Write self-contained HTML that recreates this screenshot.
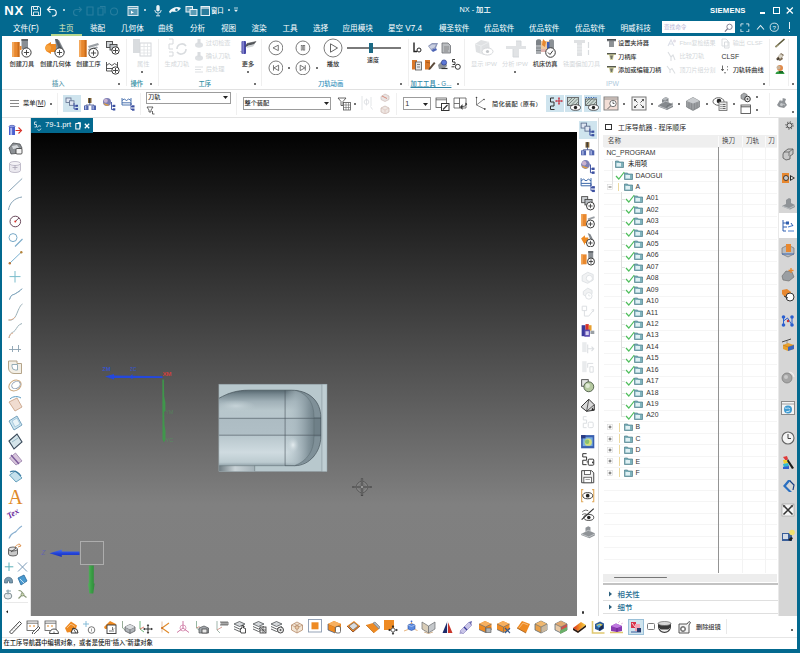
<!DOCTYPE html>
<html lang="zh-CN"><head><meta charset="utf-8"><title>NX - 加工</title>
<style>
*{box-sizing:border-box;margin:0;padding:0}
html,body{width:800px;height:653px;overflow:hidden;background:#fff}
body{position:relative;font-family:"Liberation Sans","Noto Sans CJK SC",sans-serif;font-size:6.3px;color:#333;line-height:1}
.a{position:absolute;white-space:nowrap}
.t{position:absolute;white-space:nowrap;line-height:1;font-weight:500}
#title{left:0;top:0;width:800px;height:36px;background:#03698f}
#frameL{left:0;top:0;width:2px;height:653px;background:#03698f}
#frameR{left:797px;top:0;width:3px;height:653px;background:#03698f}
#frameB{left:0;top:649px;width:800px;height:4px;background:#03698f}
.tab{color:#fff;font-size:7.6px;top:24.8px;font-weight:400}
.gl{color:#4b93ad;font-size:6.3px;top:80px}
.lb{color:#333;font-size:6.2px}
.dis{color:#c9cdd0}
#vp{left:31px;top:132px;width:546px;height:484px;background:linear-gradient(180deg,#020202 0%,#808080 77%,#7e7e7e 100%)}
.hl{background:#e2e2e2;height:1px}
.vl{background:#e2e2e2;width:1px}
.tr{font-size:6.6px;color:#333}
.dot{position:absolute;width:2px;height:2px;border-radius:1px;background:#444}
</style></head><body>
<div class="a" id="title"></div>
<div class="t" style="left:4.2px;top:4.1px;font-size:13px;font-weight:bold;color:#fff;letter-spacing:.9px">NX</div>
<svg class="a" style="left:30px;top:4.8px" width="12" height="12" viewBox="0 0 12 12"><path d="M1.5 1.5h7.5l1.5 1.5v7.5h-9z" fill="none" stroke="#e8f1f5" stroke-width="1"/><path d="M3.5 1.5v3h4v-3M3.5 10.500v-3.500h5v3.500" fill="none" stroke="#e8f1f5" stroke-width=".9"/></svg>
<svg class="a" style="left:46px;top:4.8px" width="13" height="12" viewBox="0 0 13 12"><path d="M1.500 4.500h5.500a3 3 0 0 1 0 6.500h-1" fill="none" stroke="#f2f7f9" stroke-width="1.2"/><path d="M4.500 1.500l-3 3 3 3" fill="none" stroke="#f2f7f9" stroke-width="1.200"/></svg>
<div class="a" style="left:62.500px;top:9.3px;width:2px;height:2px;background:#e8f1f5;border-radius:1px"></div>
<!-- faded icons -->
<svg class="a" style="left:72px;top:4.8px;opacity:.14" width="48" height="12" viewBox="0 0 48 12"><g fill="none" stroke="#fff" stroke-width="1.100"><path d="M9.500 4.500h-5a3 3 0 0 0 0 6h1M7 2l2.500 2.500-2.500 2.500"/><path d="M15 2h6v8h-6z"/><path d="M26 3h5v7h-5zM28 1.500h5v7"/><circle cx="42" cy="6.500" r="3.500"/></g></svg>
<svg class="a" style="left:127px;top:4.8px" width="12" height="12" viewBox="0 0 12 12"><rect x="1" y="1.500" width="10" height="9" fill="#5b9bb5" stroke="#d6e6ed" stroke-width="1"/><path d="M1 3.500h10" stroke="#d6e6ed" stroke-width="1"/><path d="M4 5.500v3.500l1-1h2z" fill="#fff"/></svg>
<div class="a" style="left:143.500px;top:9.3px;width:2px;height:2px;background:#e8f1f5;border-radius:1px"></div>
<svg class="a" style="left:153px;top:4.3px" width="10" height="13" viewBox="0 0 10 13"><rect x="3.300" y="1" width="3.400" height="6.500" rx="1.700" fill="#e8f1f5"/><path d="M1.800 6a3.200 3.200 0 0 0 6.400 0M5 9.500v2M3 11.800h4" fill="none" stroke="#e8f1f5" stroke-width=".9"/></svg>
<svg class="a" style="left:168px;top:4.8px" width="14" height="11" viewBox="0 0 14 11"><path d="M1 6.500c3-4 8-5.500 12-3.500-2 3.500-6 4.500-9 3.500l-2 2z" fill="#f2f7f9"/><circle cx="8.500" cy="4.800" r="1.300" fill="#03698f"/></svg>
<svg class="a" style="left:185px;top:4.8px" width="13" height="12" viewBox="0 0 13 12"><rect x="1" y="1.500" width="6.500" height="5.500" fill="#5b9bb5" stroke="#e8f1f5" stroke-width="1"/><rect x="5" y="4.500" width="7" height="6" fill="#5b9bb5" stroke="#e8f1f5" stroke-width="1"/></svg>
<svg class="a" style="left:199.500px;top:4.8px" width="11" height="12" viewBox="0 0 11 12"><rect x="1" y="1.500" width="8.500" height="9" fill="#2b7c9b" stroke="#e8f1f5" stroke-width="1"/><path d="M1 3h8.500" stroke="#e8f1f5" stroke-width="1.200"/></svg>
<div class="t" style="left:211px;top:7.5px;font-size:6.300px;color:#fff">窗口</div>
<div class="a" style="left:227.500px;top:9.3px;width:2px;height:2px;background:#e8f1f5;border-radius:1px"></div>
<svg class="a" style="left:233px;top:7.3px" width="6" height="6" viewBox="0 0 6 6"><path d="M1 1h4" stroke="#e8f1f5" stroke-width=".8"/><path d="M1 2.800h4l-2 2.200z" fill="#e8f1f5"/></svg>
<div class="t" style="left:459.500px;top:6.400px;font-size:7.300px;color:#fff">NX - 加工</div>
<div class="t" style="left:710px;top:7.300px;font-size:7.700px;font-weight:bold;color:#fff;letter-spacing:.15px">SIEMENS</div>
<div class="a" style="left:760px;top:12.400px;width:5.300px;height:1.200px;background:#fff"></div>
<div class="a" style="left:772.800px;top:7.300px;width:7.200px;height:6.400px;border:1.100px solid #fff"></div>
<svg class="a" style="left:786.400px;top:7px" width="7.500" height="7" viewBox="0 0 7.500 7"><path d="M.7 .5l6.100 6M6.800 .5l-6.100 6" stroke="#fff" stroke-width="1.200"/></svg>
<!-- tabs -->
<div class="t tab" style="left:13px">文件<span style="font-size:8.2px">(F)</span></div>
<div class="t tab" style="left:58.500px;color:#e0eebc">主页</div>
<div class="a" style="left:50.500px;top:33.500px;width:31.500px;height:2.100px;background:#b4d58c"></div>
<div class="t tab" style="left:90px">装配</div>
<div class="t tab" style="left:121px">几何体</div>
<div class="t tab" style="left:158px">曲线</div>
<div class="t tab" style="left:190px">分析</div>
<div class="t tab" style="left:221px">视图</div>
<div class="t tab" style="left:251.500px">渲染</div>
<div class="t tab" style="left:282.500px">工具</div>
<div class="t tab" style="left:313px">选择</div>
<div class="t tab" style="left:342.500px">应用模块</div>
<div class="t tab" style="left:388px">星空 <span style="font-size:8.2px">V7.4</span></div>
<div class="t tab" style="left:439px">模圣软件</div>
<div class="t tab" style="left:484px">优品软件</div>
<div class="t tab" style="left:529px">优品软件</div>
<div class="t tab" style="left:575px">优品软件</div>
<div class="t tab" style="left:620.500px">明威科技</div>
<div class="a" style="left:661.500px;top:21.300px;width:73px;height:11.700px;background:#fff"></div>
<div class="t" style="left:664px;top:24.600px;font-size:5.600px;color:#c3c0dc">查找命令</div>
<svg class="a" style="left:724px;top:22.600px" width="9.500" height="9.500" viewBox="0 0 10 10"><circle cx="5.800" cy="4" r="2.800" fill="none" stroke="#77778a" stroke-width=".9"/><path d="M3.800 6l-2.800 3" stroke="#77778a" stroke-width="1.300"/></svg>
<svg class="a" style="left:740px;top:22.500px" width="9.700" height="9.700" viewBox="0 0 11 11"><path d="M1 4v-3h3M7 1h3v3M10 7v3h-3M4 10h-3v-3" fill="none" stroke="#e8f1f5" stroke-width="1"/></svg>
<svg class="a" style="left:755.800px;top:23px" width="9" height="9" viewBox="0 0 9 9"><path d="M1 6.500l3.500-4 3.500 4" fill="none" stroke="#e8f1f5" stroke-width="1.100"/></svg>
<svg class="a" style="left:769.400px;top:22.200px" width="10.500" height="10.500" viewBox="0 0 11 11"><circle cx="5.500" cy="5.500" r="4.300" fill="none" stroke="#e8f1f5" stroke-width=".9"/><text x="5.500" y="8" font-size="6.500" fill="#e8f1f5" text-anchor="middle" font-family="Liberation Sans,sans-serif">?</text></svg>
<div class="a" style="left:788.800px;top:22px;width:1.600px;height:7.300px;background:#e8f1f5"></div><div class="a" style="left:788.800px;top:30.500px;width:1.600px;height:1.600px;background:#e8f1f5"></div>

<div class="a" style="left:2px;top:89px;width:795px;height:1px;background:#e1e1e1;"></div>
<div class="a" style="left:125.5px;top:39px;width:1px;height:47px;background:#efefef;"></div>
<div class="a" style="left:157.5px;top:39px;width:1px;height:47px;background:#efefef;"></div>
<div class="a" style="left:261px;top:39px;width:1px;height:47px;background:#efefef;"></div>
<div class="a" style="left:407.5px;top:39px;width:1px;height:47px;background:#efefef;"></div>
<div class="a" style="left:463.8px;top:39px;width:1px;height:47px;background:#efefef;"></div>
<div class="a" style="left:769.4px;top:39px;width:1px;height:47px;background:#efefef;"></div>
<div class="a" style="left:788px;top:39px;width:1px;height:47px;background:#efefef;"></div>
<svg class="a" style="left:10px;top:37px;" width="24" height="22" viewBox="0 0 24 22"><rect x="2" y="5" width="7.5" height="15" fill="#e8882f"/><rect x="2" y="5" width="2.2" height="15" fill="#f3a85c"/><rect x="7.6" y="5" width="1.900" height="15" fill="#c96c1c"/><rect x="11.500" y="2" width="6.500" height="10" fill="#8a8f94"/><rect x="11.500" y="2" width="6.500" height="2" fill="#5f6468"/><rect x="9.500" y="9" width="2" height="4" fill="#e8882f"/><circle cx="16.5" cy="15.5" r="4.6" fill="#fff" stroke="#3a3a3a" stroke-width="1"/><path d="M13.9 15.5h5.2M16.5 12.9v5.2" stroke="#3a3a3a" stroke-width=".9"/></svg>
<svg class="a" style="left:43px;top:37px;" width="24" height="22" viewBox="0 0 24 22"><path d="M12 2l4 1 6 12-4 4-4-2z" fill="#84898e"/><path d="M12 2l2.500 0 6 13-2.500 2z" fill="#5d6266"/><path d="M3 8l5-3 0 2 5 0 0 8-5 0 0 2-5-3z" fill="#ee8a22"/><circle cx="5" cy="11" r="3" fill="#f7a13c"/><circle cx="16.5" cy="15.5" r="4.6" fill="#fff" stroke="#3a3a3a" stroke-width="1"/><path d="M13.9 15.5h5.2M16.5 12.9v5.2" stroke="#3a3a3a" stroke-width=".9"/></svg>
<svg class="a" style="left:77px;top:37px;" width="24" height="22" viewBox="0 0 24 22"><rect x="2" y="3" width="7.500" height="17" fill="#e8882f"/><rect x="2" y="3" width="2.200" height="17" fill="#f3a85c"/><rect x="7.600" y="3" width="1.900" height="17" fill="#c96c1c"/><path d="M11 9l10-3 1 2-10 3zM11 12l9-2.500 1 1.500-9 3z" fill="#9a9fa4"/><circle cx="16.5" cy="16" r="4.6" fill="#fff" stroke="#3a3a3a" stroke-width="1"/><path d="M13.9 16h5.2M16.5 13.4v5.2" stroke="#3a3a3a" stroke-width=".9"/></svg>
<div class="t" style="left:9.5px;top:60.8px;font-size:6.2px;color:#333;">创建刀具</div>
<div class="t" style="left:40px;top:60.8px;font-size:6.2px;color:#333;">创建几何体</div>
<div class="t" style="left:76px;top:60.8px;font-size:6.2px;color:#333;">创建工序</div>
<svg class="a" style="left:105px;top:40px;" width="16" height="16" viewBox="0 0 16 16"><rect x="1.500" y="1.500" width="6" height="6" fill="#cfd3d6" stroke="#444" stroke-width=".9"/><rect x="5" y="4.500" width="7" height="5.500" fill="#b9bec3" stroke="#444" stroke-width=".9"/><circle cx="10.5" cy="10.5" r="3.7" fill="#fff" stroke="#3a3a3a" stroke-width="1"/><path d="M7.9 10.5h5.2M10.5 7.9v5.2" stroke="#3a3a3a" stroke-width=".9"/></svg>
<svg class="a" style="left:105px;top:60px;" width="16" height="16" viewBox="0 0 16 16"><path d="M1.500 2v9h11v-9M1.500 5.500l2.700-2 2.700 2 2.700-2 2.900 2M1.500 8.500h11" fill="none" stroke="#444" stroke-width=".9"/><circle cx="10.5" cy="10.5" r="3.7" fill="#fff" stroke="#3a3a3a" stroke-width="1"/><path d="M7.9 10.5h5.2M10.5 7.9v5.2" stroke="#3a3a3a" stroke-width=".9"/></svg>
<div class="t" style="left:52px;top:80.9px;font-size:6.3px;color:#5596aa;">插入</div>
<div class="dot" style="left:118.3px;top:82.5px;background:#444"></div>
<svg class="a" style="left:131px;top:37px;" width="24" height="22" viewBox="0 0 24 22"><rect x="2" y="2" width="7" height="14" fill="#d9dcdf"/><rect x="9" y="6" width="11" height="13" fill="#fff" stroke="#d3d6da" stroke-width="1"/><path d="M9 9.500h11M9 13h11M9 16h11M13 6v13M16.500 6v13" stroke="#dfe2e5" stroke-width=".8"/></svg>
<div class="t" style="left:137px;top:60.8px;font-size:6.2px;color:#d3d7da;;font-weight:400">属性</div>
<div class="dot" style="left:141.3px;top:70.7px;background:#444"></div>
<div class="t" style="left:130.5px;top:80.9px;font-size:6.3px;color:#2f8ea3;">操作</div>
<div class="dot" style="left:149.5px;top:82.5px;background:#444"></div>
<svg class="a" style="left:165px;top:37px;" width="24" height="22" viewBox="0 0 24 22"><path d="M4 2h4v5h-4v5h4M4 15h4v4h-4" fill="none" stroke="#d6d9dc" stroke-width="1"/><path d="M12 12a5 5 0 0 1 9-3M21 12a5 5 0 0 1-9 3" fill="none" stroke="#d9dcdf" stroke-width="1.600"/></svg>
<div class="t" style="left:164.5px;top:60.8px;font-size:6.2px;color:#d3d7da;;font-weight:400">生成刀轨</div>
<svg class="a" style="left:194px;top:38.2px;" width="11" height="11" viewBox="0 0 11 11"><ellipse cx="5" cy="7" rx="4" ry="2.800" fill="#dde0e3"/><rect x="3.500" y="1" width="3" height="5" fill="#d9dcdf"/></svg>
<div class="t" style="left:205.8px;top:40.2px;font-size:6.2px;color:#d3d7da;;font-weight:400">过切检查</div>
<svg class="a" style="left:194px;top:51.3px;" width="11" height="11" viewBox="0 0 11 11"><ellipse cx="5" cy="7" rx="4" ry="2.800" fill="#dde0e3"/><rect x="3.500" y="1" width="3" height="5" fill="#d9dcdf"/></svg>
<div class="t" style="left:205.8px;top:53.3px;font-size:6.2px;color:#d3d7da;;font-weight:400">确认刀轨</div>
<svg class="a" style="left:194px;top:64.4px;" width="11" height="11" viewBox="0 0 11 11"><path d="M1 3h8M1 5.500h6M1 8h8" stroke="#dde0e3" stroke-width="1"/></svg>
<div class="t" style="left:205.8px;top:66.4px;font-size:6.2px;color:#d3d7da;;font-weight:400">后处理</div>
<svg class="a" style="left:239px;top:39px;" width="19" height="17" viewBox="0 0 19 17"><rect x="2.500" y="2" width="4.500" height="13" rx="1" fill="#4747a6"/><rect x="3.500" y="2" width="1.300" height="13" fill="#8f8fd6"/><path d="M1.500 12l1.500 1.500M8 4.500l9-2-2.500 3-8 2z" fill="#55585c" stroke="#3c3f42" stroke-width=".5"/><path d="M9 6.500l7-1.500-2 2.500-6.500 1.500z" fill="#cfd3d6"/></svg>
<div class="t" style="left:241.8px;top:60.8px;font-size:6.2px;color:#333;">更多</div>
<div class="dot" style="left:247px;top:70.7px;background:#444"></div>
<div class="t" style="left:198.5px;top:80.9px;font-size:6.3px;color:#2f8ea3;">工序</div>
<div class="dot" style="left:254.4px;top:82.5px;background:#444"></div>
<svg class="a" style="left:267.70000000000005px;top:40.1px;" width="15.8" height="15.8" viewBox="0 0 15.8 15.8"><circle cx="7.9" cy="7.9" r="6.9" fill="#fff" stroke="#5a5a5a" stroke-width=".8"/><path d="M5 7.900l5.300-2.700v5.400z" fill="none" stroke="#555" stroke-width=".8"/></svg>
<svg class="a" style="left:295.1px;top:40.1px;" width="15.8" height="15.8" viewBox="0 0 15.8 15.8"><circle cx="7.9" cy="7.9" r="6.9" fill="#fff" stroke="#5a5a5a" stroke-width=".8"/><rect x="6.200" y="5.700" width="1.400" height="4.400" fill="none" stroke="#555" stroke-width=".6"/><rect x="8.400" y="5.700" width="1.400" height="4.400" fill="none" stroke="#555" stroke-width=".6"/></svg>
<svg class="a" style="left:322.7px;top:37.7px;" width="20" height="20" viewBox="0 0 20 20"><circle cx="10" cy="10" r="9" fill="#fff" stroke="#5a5a5a" stroke-width=".8"/><path d="M7.500 5.800l7 4.200-7 4.200z" fill="none" stroke="#555" stroke-width=".9"/></svg>
<svg class="a" style="left:267.70000000000005px;top:59.6px;" width="15.8" height="15.8" viewBox="0 0 15.8 15.8"><circle cx="7.9" cy="7.9" r="6.9" fill="#fff" stroke="#5a5a5a" stroke-width=".8"/><path d="M5.500 5.200v5.400M6 7.900l4.600-2.700v5.400z" fill="none" stroke="#555" stroke-width=".8"/></svg>
<svg class="a" style="left:295.1px;top:59.6px;" width="15.8" height="15.8" viewBox="0 0 15.8 15.8"><circle cx="7.9" cy="7.9" r="6.9" fill="#fff" stroke="#5a5a5a" stroke-width=".8"/><path d="M10.300 5.200v5.400M9.800 7.900l-4.600-2.700v5.400z" fill="none" stroke="#555" stroke-width=".8"/></svg>
<div class="dot" style="left:288px;top:66.5px;background:#444"></div>
<div class="dot" style="left:315.5px;top:66.5px;background:#444"></div>
<div class="t" style="left:326.8px;top:60.8px;font-size:6.2px;color:#333;">播放</div>
<div class="a" style="left:347px;top:47.3px;width:54px;height:1.3px;background:#7a7a7a;"></div>
<div class="a" style="left:369.3px;top:43px;width:3.6px;height:10px;background:#1b6a85;"></div>
<div class="t" style="left:367px;top:57.2px;font-size:6.0px;color:#333;">速度</div>
<div class="t" style="left:318px;top:80.9px;font-size:6.3px;color:#3a94bd;">刀轨动画</div>
<div class="dot" style="left:400px;top:82.5px;background:#444"></div>
<svg class="a" style="left:411px;top:41px;" width="12" height="13" viewBox="0 0 12 13"><path d="M3 1.500v9h3" fill="none" stroke="#222" stroke-width="1.400"/><circle cx="8" cy="9" r="2" fill="none" stroke="#222" stroke-width="1"/></svg>
<svg class="a" style="left:427px;top:41px;" width="12" height="13" viewBox="0 0 12 13"><path d="M1 5l4-3h6l-2 5-5 2z" fill="#8d97b8"/><path d="M2 5.500l3-2h4l-1.500 3-3.500 1.500z" fill="#c9cfe0"/><path d="M4 9l5-2 1 2-4 2z" fill="#4f66b5"/></svg>
<svg class="a" style="left:440px;top:41px;" width="12" height="13" viewBox="0 0 12 13"><path d="M2 2h6l2.500 2.500v7.500h-8.500z" fill="#b9bcbf" stroke="#6c7074" stroke-width=".8"/><path d="M4 6h5M4 8h5M4 10h4" stroke="#777" stroke-width=".7"/></svg>
<svg class="a" style="left:411px;top:58px;" width="12" height="13" viewBox="0 0 12 13"><rect x="1" y="2" width="5" height="9.500" fill="#d9782a"/><rect x="4.500" y="4" width="6" height="8" fill="#e4e6e8" stroke="#555" stroke-width=".8"/><path d="M6 6.500h3M6 9h3" stroke="#555" stroke-width=".7"/></svg>
<svg class="a" style="left:424px;top:58px;" width="12" height="13" viewBox="0 0 12 13"><rect x="1" y="2" width="5" height="9.500" fill="#d9782a"/><path d="M5 10l5-6 1.500 1.200-5 6-2 .8z" fill="#5b4a3a"/><path d="M2 4l4 1" stroke="#a85a1a" stroke-width="1"/></svg>
<svg class="a" style="left:437px;top:58px;" width="12" height="13" viewBox="0 0 12 13"><path d="M1 7l3-3h5l1 4-3 3h-5z" fill="#8e9397"/><circle cx="7" cy="4.500" r="2.600" fill="#5d78d6" stroke="#2c3e8a" stroke-width=".7"/><path d="M4.500 10.500h6" stroke="#333" stroke-width="1.200"/></svg>
<svg class="a" style="left:450px;top:58px;" width="12" height="13" viewBox="0 0 12 13"><path d="M5 1.500h-2.500v2.500h2.500v2.500h-2.500" fill="none" stroke="#222" stroke-width=".9"/><circle cx="7.800" cy="8.800" r="2.500" fill="none" stroke="#222" stroke-width=".9"/><path d="M1.500 8.800h3" stroke="#222" stroke-width=".9"/></svg>
<div class="t" style="left:410.5px;top:80.9px;font-size:6.3px;color:#2f86a6;text-decoration:underline">加工工具 - G...</div>
<div class="dot" style="left:456.5px;top:82.5px;background:#444"></div>
<svg class="a" style="left:472px;top:38px;" width="24" height="21" viewBox="0 0 24 21"><path d="M3 6l6-4 8 2 1 9-6 4-8-3z" fill="#dfe1e3"/><path d="M3 6l6 2 8-4M9 8l0 8" stroke="#eceeef" stroke-width="1" fill="none"/><ellipse cx="15.500" cy="13.500" rx="5.500" ry="3.500" fill="#fff" stroke="#d2d5d8" stroke-width=".9"/><circle cx="15.500" cy="13.500" r="1.600" fill="#c3c6c9"/></svg>
<div class="t" style="left:471px;top:60.8px;font-size:6.2px;color:#d3d7da;;font-weight:400">显示 IPW</div>
<svg class="a" style="left:504px;top:38px;" width="24" height="21" viewBox="0 0 24 21"><path d="M2 8h10v-5h5v5h5v3h-7v8h-6v-8h-7z" fill="#e1e3e5"/><path d="M12 3h5v5M9 11v8h6" fill="none" stroke="#d3d6d9" stroke-width=".9"/></svg>
<div class="t" style="left:502px;top:60.8px;font-size:6.2px;color:#d3d7da;;font-weight:400">分析 IPW</div>
<div class="dot" style="left:514.4px;top:70.8px;background:#444"></div>
<svg class="a" style="left:534px;top:37px;" width="24" height="22" viewBox="0 0 24 22"><path d="M2 4c0-2 4-2.500 5-1v14h-5z" fill="#7d8287"/><path d="M15 3c2-1.500 5-1 5 1v9h-5z" fill="#8c9196"/><path d="M2 8h5v9h-5z" fill="#a9adb1"/><path d="M2 11h5M2 13.500h5" stroke="#6d7276" stroke-width=".7"/><path d="M7 4h8v8h-8z" fill="#f0c9a0"/><path d="M9 2l3 3-1 5-3-2z" fill="#e8882f"/><path d="M13 5h2.500v7h-2.500z" fill="#3f5fb5"/><path d="M7 12h8v3h-8z" fill="#d9a09a" opacity=".8"/><circle cx="16.500" cy="15.500" r="4.800" fill="#fff" stroke="#3a3a3a" stroke-width="1"/><path d="M14 15.500l2 2 3-4" fill="none" stroke="#3a3a3a" stroke-width="1"/></svg>
<div class="t" style="left:532.8px;top:60.8px;font-size:6.2px;color:#333;">机床仿真</div>
<svg class="a" style="left:571px;top:38px;" width="22" height="21" viewBox="0 0 22 21"><path d="M3 2h11v3h-3v13h-5v-13h-3z" fill="#dfe1e3"/><path d="M6 8h5M6 11h5M6 14h5" stroke="#eef0f1" stroke-width=".9"/><path d="M17.500 4v6M17.500 12v5" stroke="#d9dcdf" stroke-width="1.200"/></svg>
<div class="t" style="left:563px;top:60.8px;font-size:6.2px;color:#d3d7da;;font-weight:400">铣面偏加刀具</div>
<svg class="a" style="left:606px;top:38px;" width="11" height="10" viewBox="0 0 11 10"><path d="M1 1h9v2.200h-2.300v5.800h-4.400v-5.800h-2.300z" fill="#6d7175"/><path d="M3.300 3.200h4.400v5.800h-4.400z" fill="#8d9195"/><path d="M1 1h9v1h-9z" fill="#4a4d50"/></svg>
<div class="t" style="left:618px;top:40.3px;font-size:6.2px;color:#333;">设置夹持器</div>
<svg class="a" style="left:606px;top:52px;" width="11" height="9" viewBox="0 0 11 9"><path d="M1 1h9v2h-2l-1.200 5h-2.600l-1.200-5h-2z" fill="#d5d3a0"/><path d="M1 1h9v1.300h-9z" fill="#55584f"/><path d="M4 3.500h3l-.8 3.500h-1.400z" fill="#6f7268"/></svg>
<div class="t" style="left:618px;top:54px;font-size:6.2px;color:#333;">刀柄库</div>
<svg class="a" style="left:606px;top:65px;" width="11" height="9" viewBox="0 0 11 9"><path d="M1 1h9v2h-2l-1.200 5h-2.600l-1.200-5h-2z" fill="#d5d3a0"/><path d="M1 1h9v1.300h-9z" fill="#55584f"/><path d="M4 3.500h3l-.8 3.500h-1.400z" fill="#6f7268"/></svg>
<div class="t" style="left:618px;top:66.6px;font-size:6.2px;color:#333;">添加或编辑刀柄</div>
<div class="t" style="left:606px;top:80.6px;font-size:6.8px;color:#aec9dc;">IPW</div>
<svg class="a" style="left:666px;top:38px;" width="11" height="10" viewBox="0 0 11 10"><path d="M2 8l3-6 3 6M3 6h4" fill="none" stroke="#dcdfe8" stroke-width="1.100"/><circle cx="8.500" cy="3" r="1.500" fill="#e4dfe8"/></svg>
<div class="t" style="left:679.5px;top:40.3px;font-size:6.0px;color:#d3d7da;;font-weight:400">Fbm复检结果</div>
<svg class="a" style="left:666px;top:51px;" width="11" height="11" viewBox="0 0 11 11"><path d="M2 1l3 5 2-2 2 5M5 6v4" fill="none" stroke="#dcdfe2" stroke-width="1.100"/></svg>
<div class="t" style="left:679.5px;top:53.4px;font-size:6.2px;color:#d3d7da;;font-weight:400">比较刀轨</div>
<svg class="a" style="left:666px;top:64px;" width="11" height="11" viewBox="0 0 11 11"><path d="M1 2l3 4 2-1.500 3 5M4 6v3" fill="none" stroke="#dcdfe2" stroke-width="1.100"/></svg>
<div class="t" style="left:679.5px;top:66.6px;font-size:6.0px;color:#d3d7da;;font-weight:400">顶刀片组分割</div>
<svg class="a" style="left:720px;top:38px;" width="11" height="11" viewBox="0 0 11 11"><path d="M2 1h4l2 2v5h-6zM4.500 4h4.500v6h-4.500z" fill="#fff" stroke="#d6d9dc" stroke-width=".9"/></svg>
<div class="t" style="left:732.7px;top:40.3px;font-size:6.2px;color:#d3d7da;;font-weight:400">输出 CLSF</div>
<div class="t" style="left:721.5px;top:54.2px;font-size:6.9px;color:#333;">CLSF</div>
<svg class="a" style="left:720px;top:64px;" width="11" height="11" viewBox="0 0 11 11"><path d="M2.500 1.500v5M1.200 5l1.300 1.800 1.300-1.800" fill="none" stroke="#444" stroke-width=".8"/><circle cx="5" cy="8.800" r=".7" fill="#444"/><path d="M7.500 2v1.500M7.500 5v1.500" stroke="#777" stroke-width=".8"/></svg>
<div class="t" style="left:732.7px;top:66.6px;font-size:6.2px;color:#333;">刀轨转曲线</div>
<div class="dot" style="left:763px;top:82.5px;background:#444"></div>
<svg class="a" style="left:774px;top:38px;" width="12" height="10" viewBox="0 0 12 10"><path d="M1.500 9l9-8" stroke="#5c5a3a" stroke-width="1.600"/><path d="M1.500 9l3-2.500" stroke="#9a9470" stroke-width="1.600"/></svg>
<svg class="a" style="left:774px;top:51px;" width="12" height="11" viewBox="0 0 12 11"><path d="M2 8l5-6 3 2-2 2 1 2-3 2z" fill="#7a6a55"/><path d="M4 5l3-2 2 2-3 3z" fill="#d8d2c4"/><path d="M3 9l2-2" stroke="#3b352c" stroke-width="1.200"/></svg>
<svg class="a" style="left:774px;top:64px;" width="12" height="11" viewBox="0 0 12 11"><circle cx="6" cy="4" r="3" fill="#e08a4a"/><path d="M1.500 10c0-4 9-4 9 0z" fill="#2f9a3f"/><circle cx="4.500" cy="3.500" r="2" fill="#c9b49a"/><rect x="5" y="7" width="4" height="2" fill="#1c6a2a"/></svg>
<div class="dot" style="left:791.7px;top:82.5px;background:#444"></div>

<div class="a" style="left:2px;top:117px;width:796px;height:1px;background:#e3e3e3;"></div>
<div class="a" style="left:10px;top:100.0px;width:8.5px;height:1px;background:#8a8a8a;"></div>
<div class="a" style="left:10px;top:103.2px;width:8.5px;height:1px;background:#8a8a8a;"></div>
<div class="a" style="left:10px;top:106.4px;width:8.5px;height:1px;background:#8a8a8a;"></div>
<div class="t" style="left:23px;top:100.1px;font-size:6.2px;color:#333;">菜单<span style="font-size:6.9px">(<u>M</u>)</span></div>
<div class="dot" style="left:50px;top:102.5px;background:#444"></div>
<div class="a" style="left:57px;top:93px;width:1px;height:22px;background:#f0f0f0;"></div>
<div class="a" style="left:140px;top:93px;width:1px;height:22px;background:#f0f0f0;"></div>
<div class="a" style="left:235.6px;top:93px;width:1px;height:22px;background:#f0f0f0;"></div>
<div class="a" style="left:395.6px;top:93px;width:1px;height:22px;background:#f0f0f0;"></div>
<div class="a" style="left:769.4px;top:93px;width:1px;height:22px;background:#f0f0f0;"></div>
<div class="a" style="left:63px;top:95px;width:17.5px;height:16.5px;background:#cfe4ee;"></div>
<svg class="a" style="left:64.5px;top:96.5px;" width="14" height="14" viewBox="0 0 14 14"><rect x="1" y="1" width="5" height="4.500" fill="#dfe6f2" stroke="#5a6b8c" stroke-width=".8"/><rect x="4.500" y="3.800" width="4.500" height="4.500" fill="#dfe6f2" stroke="#5a6b8c" stroke-width=".8"/><path d="M9 6v6h3M9 9h3" fill="none" stroke="#3b4fa0" stroke-width=".9"/><rect x="10.500" y="7.800" width="2.500" height="2" fill="#3b4fa0"/><rect x="10.500" y="11" width="2.500" height="2" fill="#3b4fa0"/></svg>
<svg class="a" style="left:83px;top:96.5px;" width="14" height="14" viewBox="0 0 14 14"><rect x="5" y="1" width="3.500" height="5" fill="#8a6b3a"/><rect x="6" y="1" width="1.200" height="5" fill="#3b3b3b"/><path d="M6.800 6v2M3 8h8M3 8v1.500M11 8v1.500" stroke="#44548c" stroke-width=".8" fill="none"/><rect x="1" y="8.500" width="4.500" height="4.500" fill="#4e62ad"/><rect x="8.500" y="8.500" width="4.500" height="4.500" fill="#4e62ad"/><rect x="2" y="9" width="1.300" height="3.500" fill="#a9b5e0"/><rect x="9.500" y="9" width="1.300" height="3.500" fill="#a9b5e0"/></svg>
<svg class="a" style="left:102px;top:96.5px;" width="14" height="14" viewBox="0 0 14 14"><circle cx="5" cy="5" r="4" fill="#7d7fb5"/><circle cx="3.800" cy="3.800" r="2" fill="#c9b2d0"/><path d="M1.500 6a4 4 0 0 0 6 2z" fill="#e0a040"/><path d="M9.500 5v7.500h3M9.500 9h3" fill="none" stroke="#3b4fa0" stroke-width=".9"/><rect x="10.800" y="7.800" width="2.500" height="2.200" fill="#3b4fa0"/><rect x="10.800" y="11.300" width="2.500" height="2.200" fill="#3b4fa0"/></svg>
<svg class="a" style="left:120.5px;top:96.5px;" width="14" height="14" viewBox="0 0 14 14"><path d="M1 1v7h9v-7M1 3.500l2.200-1.500 2.300 1.500 2.200-1.500 2.300 1.500M1 5.800h9" fill="none" stroke="#3b67a8" stroke-width=".9"/><path d="M10 6v6.500h3M10 9.500h3" fill="none" stroke="#3b4fa0" stroke-width=".9"/><rect x="11" y="8.300" width="2.500" height="2.200" fill="#3b4fa0"/><rect x="11" y="11.500" width="2.500" height="2.200" fill="#3b4fa0"/></svg>
<div class="a" style="left:146px;top:91.5px;width:84.6px;height:12px;background:#fff;border:1px solid #9c9c9c"></div>
<div class="t" style="left:148px;top:94.1px;font-size:6.2px;color:#333;">刀轨</div>
<svg class="a" style="left:223.1px;top:96.3px;" width="5" height="3" viewBox="0 0 5 3"><path d="M0 0h5l-2.500 3z" fill="#222"/></svg>
<svg class="a" style="left:145.5px;top:105.5px;" width="11" height="9" viewBox="0 0 11 9"><path d="M1 1h6l-2 3v2h-2v-2z" fill="none" stroke="#444" stroke-width=".8"/><path d="M6.500 5v3h2" fill="none" stroke="#444" stroke-width=".8"/></svg>
<div class="a" style="left:242.5px;top:97.3px;width:88.5px;height:12.6px;background:#fff;border:1px solid #9c9c9c"></div>
<div class="t" style="left:244.5px;top:100.19999999999999px;font-size:6.2px;color:#333;">整个装配</div>
<svg class="a" style="left:323.5px;top:102.39999999999999px;" width="5" height="3" viewBox="0 0 5 3"><path d="M0 0h5l-2.500 3z" fill="#222"/></svg>
<svg class="a" style="left:336.5px;top:96.5px;" width="15" height="14" viewBox="0 0 15 14"><path d="M1 1h8l-3 3.500v4h-2v-4z" fill="#fff" stroke="#444" stroke-width=".8"/><rect x="6.500" y="5.500" width="7" height="7.500" fill="#fff" stroke="#555" stroke-width=".8"/><path d="M6.500 8h7M6.500 10.500h7M9 5.500v7.500M11.500 5.500v7.500" stroke="#666" stroke-width=".6"/></svg>
<div class="dot" style="left:353.6px;top:102.5px;background:#444"></div>
<svg class="a" style="left:360px;top:95px;" width="16" height="17" viewBox="0 0 16 17"><path d="M2 1v14M11 2v9" stroke="#dcdfe2" stroke-width=".8"/><circle cx="6.500" cy="7" r="2.300" fill="none" stroke="#d9dcdf" stroke-width=".8"/><path d="M6.500 3.500v7M10.500 11.500l2 3" stroke="#d9dcdf" stroke-width=".8"/></svg>
<svg class="a" style="left:380px;top:92.5px;" width="10" height="9" viewBox="0 0 10 9"><path d="M1 3.500l4-2.500 4 2v3.500l-4 2-4-2z" fill="#e9e4e2" stroke="#cbbcb8" stroke-width=".7"/><path d="M2 3l5 2.500" stroke="#d98a7a" stroke-width="1"/></svg>
<svg class="a" style="left:380px;top:104.5px;" width="10" height="9.5" viewBox="0 0 10 9.5"><path d="M1 3l4-2 4 2v4l-4 2-4-2z" fill="#eee6e2" stroke="#c9b5ae" stroke-width=".7"/><path d="M1 3l4 2 4-2M5 5v4" stroke="#d8c0b8" stroke-width=".6" fill="none"/></svg>
<div class="a" style="left:403px;top:97px;width:27.6px;height:13.4px;background:#fff;border:1px solid #9c9c9c"></div>
<svg class="a" style="left:423.1px;top:102.5px;" width="5" height="3" viewBox="0 0 5 3"><path d="M0 0h5l-2.500 3z" fill="#222"/></svg>
<div class="t" style="left:405.3px;top:100.3px;font-size:7.2px;color:#333;">1</div>
<svg class="a" style="left:435px;top:96.5px;" width="15" height="14.5" viewBox="0 0 15 14.5"><rect x="1" y="1" width="10.500" height="9.500" fill="#fff" stroke="#555" stroke-width=".8"/><path d="M1 2.800h10.500" stroke="#555" stroke-width=".8"/><rect x="6.500" y="6.500" width="7.500" height="7" fill="#fff" stroke="#333" stroke-width="1"/><path d="M8 12.500l4.500-4.500" stroke="#333" stroke-width="1.200"/></svg>
<svg class="a" style="left:453px;top:96.5px;" width="16" height="14.5" viewBox="0 0 16 14.5"><path d="M1 1h12v10h-12zM6.500 1v10M1 6.500h5.500" fill="#fff" stroke="#555" stroke-width=".8"/><path d="M8 12.500l2.500-3v6z" fill="#333" transform="translate(-1,-2.500)"/><path d="M9 9.500c3 0 4.500-1 4.500-3" fill="none" stroke="#333" stroke-width=".8"/><path d="M12.500 5.500l1.800 1.800-2 .8z" fill="#333"/></svg>
<svg class="a" style="left:474px;top:96px;" width="13" height="15" viewBox="0 0 13 15"><path d="M2.500 1.500v7.500l8 4M2.500 9l7-5.500" fill="none" stroke="#555" stroke-width=".7"/><circle cx="2.500" cy="1.500" r=".8" fill="#444"/><circle cx="10" cy="3.500" r=".8" fill="#444"/><circle cx="10.800" cy="13" r=".9" fill="#444"/></svg>
<div class="t" style="left:492px;top:100.8px;font-size:6.2px;color:#333;letter-spacing:.35px">简化装配 (原有)</div>
<div class="a" style="left:546px;top:95.3px;width:17.5px;height:16.4px;background:#cfe4ee;"></div>
<div class="a" style="left:565px;top:95.3px;width:16.5px;height:16.4px;background:#cfe4ee;"></div>
<div class="a" style="left:583.5px;top:95.3px;width:17.5px;height:16.4px;background:#cfe4ee;"></div>
<svg class="a" style="left:547.5px;top:96px;" width="16" height="15" viewBox="0 0 16 15"><path d="M6 2h-3.500v4h3.500v4h-3.500v3.500h4" fill="none" stroke="#2f2f2f" stroke-width="1"/><path d="M11 2v6M8 5h6" stroke="#c42a3a" stroke-width="1.100"/><path d="M11 1l1.200 1.500h-2.400zM11 9l1.200-1.500h-2.400zM7 5l1.500-1.200v2.400zM15 5l-1.500-1.200v2.400z" fill="#c42a3a"/></svg>
<svg class="a" style="left:565.5px;top:96px;" width="16" height="15" viewBox="0 0 16 15"><rect x="1.500" y="1.500" width="11" height="8" fill="#c8d4cf" stroke="#555" stroke-width=".8"/><path d="M2 6l4-4M2 9l7-7M5 9.500l7-7M8.500 9.500l4-4" stroke="#5c6b66" stroke-width=".7"/><ellipse cx="9.500" cy="11.500" rx="5" ry="2.800" fill="#fff" stroke="#333" stroke-width=".8"/><circle cx="9.500" cy="11.500" r="1.700" fill="#222"/></svg>
<svg class="a" style="left:584px;top:96px;" width="16" height="15" viewBox="0 0 16 15"><rect x="1.500" y="3" width="11" height="6.500" fill="#c8d4cf" stroke="#555" stroke-width=".8"/><path d="M2 6l4-4M2 9l7-7M5 9.500l7-7M8.500 9.500l4-4" stroke="#5c6b66" stroke-width=".7"/><path d="M1.500 1.500h11" stroke="#3a66b0" stroke-width=".9" stroke-dasharray="1.500 1"/><ellipse cx="9.500" cy="11.500" rx="5" ry="2.800" fill="#fff" stroke="#333" stroke-width=".8"/><circle cx="9.500" cy="11.500" r="1.700" fill="#222"/></svg>
<svg class="a" style="left:603px;top:96px;" width="16" height="15" viewBox="0 0 16 15"><rect x="1" y="1" width="14" height="13" fill="#f3ded6" stroke="#777" stroke-width=".9"/><path d="M1 3h14" stroke="#888" stroke-width=".9"/><circle cx="10" cy="7.500" r="3.200" fill="#fff" stroke="#555" stroke-width=".8"/><path d="M10 5.500v2h1.500M7.500 10l-3 3" stroke="#555" stroke-width=".9" fill="none"/></svg>
<div class="dot" style="left:623px;top:102.5px;background:#444"></div>
<svg class="a" style="left:630.5px;top:96px;" width="16" height="15" viewBox="0 0 16 15"><rect x="1" y="1" width="14" height="13" fill="#f4f4f4" stroke="#777" stroke-width="1"/><path d="M3.500 3.500l3 3M12.500 3.500l-3 3M3.500 11.500l3-3M12.500 11.500l-3-3" stroke="#555" stroke-width="1"/><path d="M3 3h2.500l-2.500 2.500zM13 3v2.500l-2.500-2.500zM3 12v-2.500l2.500 2.500zM13 12h-2.500l2.500-2.500z" fill="#555"/></svg>
<div class="dot" style="left:650.5px;top:102.5px;background:#444"></div>
<svg class="a" style="left:657px;top:96px;" width="17" height="15" viewBox="0 0 17 15"><path d="M1 9.500l4-2.500v-3.500l3.500-2.500 3 1.200v4l4.500 2.300v2.500l-6 3-9-3.500z" fill="#85898d"/><path d="M5 7l3.500-1.800 3 .8M1 9.500l8 3.200 7-3.500" fill="none" stroke="#c5c8cb" stroke-width=".8"/><path d="M5 3.500l3.500-2.500 3 1.200-3.500 2.300z" fill="#b5b9bd"/><path d="M10 12.500v-2.500l6-3" fill="none" stroke="#5d6165" stroke-width=".6"/></svg>
<div class="dot" style="left:677.5px;top:102.5px;background:#444"></div>
<svg class="a" style="left:685px;top:96px;" width="16" height="15" viewBox="0 0 16 15"><path d="M1.500 5l6.500-3.500 6.500 3.500v6l-6.500 3.500-6.500-3.500z" fill="#9a9da0" stroke="#6d7174" stroke-width=".6"/><path d="M1.500 5l6.500 2.500 6.500-2.500-6.500-3.500z" fill="#c9cccf"/><path d="M4 6.500v6M6.500 7.300v6.500M9.500 7.300v6.500M12 6.500v6" stroke="#7d8184" stroke-width=".6"/></svg>
<div class="dot" style="left:705.5px;top:102.5px;background:#444"></div>
<svg class="a" style="left:712px;top:96px;" width="17" height="15" viewBox="0 0 17 15"><ellipse cx="6.500" cy="5.500" rx="5.500" ry="3.800" fill="#fff" stroke="#444" stroke-width=".8"/><circle cx="7" cy="5" r="2.300" fill="#222"/><rect x="7" y="6" width="8" height="8.500" fill="#e9e9e9" stroke="#666" stroke-width=".8"/><path d="M8.500 8.500h1M10.500 8.500h3M8.500 10.500h1M10.500 10.500h3M8.500 12.500h1M10.500 12.500h3" stroke="#444" stroke-width=".8"/></svg>
<div class="dot" style="left:732.5px;top:102.5px;background:#444"></div>
<svg class="a" style="left:740px;top:91.5px;" width="12" height="11" viewBox="0 0 12 11"><path d="M1 3l3-2 3 1.500v4l-3 1.500-3-1.500z" fill="#a5a8ab" stroke="#666" stroke-width=".6"/><circle cx="7.500" cy="7" r="2.800" fill="#e4e4e4" stroke="#333" stroke-width="1"/><circle cx="7.500" cy="7" r=".9" fill="#555"/></svg>
<div class="dot" style="left:756px;top:95.5px;background:#444"></div>
<svg class="a" style="left:740px;top:104px;" width="12" height="11" viewBox="0 0 12 11"><rect x="1" y="1" width="9.500" height="8.500" fill="#fff" stroke="#555" stroke-width=".9"/><path d="M1 2.800h9.500" stroke="#555" stroke-width="1"/></svg>
<div class="dot" style="left:756px;top:108.5px;background:#444"></div>
<svg class="a" style="left:775px;top:96px;" width="14" height="13" viewBox="0 0 14 13"><path d="M2 9l3-5 2 1 1-3 3 1-1 3 2 3-3 3-5-1z" fill="#8f9397"/><path d="M5 4l2 1 1-3M8 8l2 1" stroke="#d0d3d6" stroke-width=".8" fill="none"/><circle cx="6.500" cy="8.500" r="1.500" fill="#c5c8cb"/></svg>
<div class="dot" style="left:791.5px;top:111px;background:#444"></div>

<svg class="a" style="left:0px;top:0px;overflow:visible" width="31" height="620" viewBox="0 0 31 620"><rect x="9" y="126.500" width="6" height="8.500" fill="#4a5fd0"/><rect x="10.300" y="126.500" width="1.800" height="8.500" fill="#b5c0f0"/><ellipse cx="12" cy="126.500" rx="3" ry="1.200" fill="#8a9ae8" stroke="#2a3a9a" stroke-width=".5"/><path d="M15.500 130.500h5M18.500 127.500l3 3-3 3" fill="none" stroke="#d8322a" stroke-width="1.1" /><path d="M9 148l4-5 7 1 2 4-2 5-9 1z" fill="#8d9195" stroke="#3c3f42" stroke-width=".7"/><path d="M12 146l5-1 2 3-6 1z" fill="#d5d8db"/><rect x="16" y="148.500" width="6" height="5.500" rx="1" fill="#f4f4f4" stroke="#333" stroke-width=".8"/><path d="M9.500 163.500v7a5.500 2 0 0 0 11 0v-7" fill="#ebe9ef" stroke="#b5b0c0" stroke-width=".8"/><ellipse cx="15" cy="163.500" rx="5.500" ry="2" fill="#f4f2f6" stroke="#b5b0c0" stroke-width=".8"/><path d="M15 165v5M12.500 167.500h5" stroke="#a9a5b5" stroke-width=".8"/><path d="M8.500 191.500l13.700-13" fill="none" stroke="#8aa5b8" stroke-width="1" /><path d="M8.500 210c1-7 6-12 13.500-13" fill="none" stroke="#8aa5b8" stroke-width="1" /><circle cx="15.300" cy="221.500" r="5.300" fill="none" stroke="#6a4a5c" stroke-width="1"/><path d="M15.300 221.500l3.800-3.700" stroke="#6a4a5c" stroke-width="1"/><circle cx="15.300" cy="221.500" r="1" fill="#d8322a"/><circle cx="13" cy="237.600" r="4" fill="none" stroke="#7aaac8" stroke-width="1"/><path d="M15 246.500l7.500-7.500" fill="none" stroke="#7aaac8" stroke-width="1.1" /><path d="M9.500 263.500l12-11.500" fill="none" stroke="#7ab0d0" stroke-width="1" /><circle cx="9.800" cy="263.300" r="1.200" fill="#b5743a"/><circle cx="21.300" cy="252.300" r="1.200" fill="#b5843a"/><path d="M15 271v11.500M9.500 276.600h11" fill="none" stroke="#7abccc" stroke-width="1" /><path d="M9.500 299.600c2-6 3-4 6-6s4-2 6.500-5" fill="none" stroke="#5a8aa8" stroke-width="1" /><path d="M8.500 320c5 1 7-3 9-8s4-8 5-8" fill="none" stroke="#9ab0b8" stroke-width="1" /><path d="M8.500 320c3 0 5-1 6.500-3" fill="none" stroke="#e0b090" stroke-width="1" /><path d="M9 338c1-6 4-5 6-7.500s3-6 7-7" fill="none" stroke="#9ab0b8" stroke-width="1" /><path d="M9 338c.500-3 2-4.500 4-5" fill="none" stroke="#e0b090" stroke-width="1" /><path d="M9 349.500h12M12.500 346v6M18.500 345v7" fill="none" stroke="#8aa0b0" stroke-width="0.9" /><path d="M8.500 361h8.500v2.500h4.500v10h-7.500a5.500 5.500 0 0 1-5.500-5.500z" fill="#f3efe6" stroke="#b5a58a" stroke-width="1" /><path d="M12 364.500h5.500v5.500h-2a3.500 3.500 0 0 1-3.500-3.500z" fill="#fff" stroke="#8aa5b0" stroke-width="0.9" /><ellipse cx="15" cy="385.500" rx="6.500" ry="5" fill="none" stroke="#c9a57a" stroke-width="1" transform="rotate(-30 15 385.500)"/><ellipse cx="16" cy="385" rx="4.500" ry="3.300" fill="none" stroke="#8a9ab0" stroke-width=".9" transform="rotate(-30 16 385)"/><path d="M9 402l8-4 5 9-7 4z" fill="#f0dcd0" stroke="#c9a58a" stroke-width="0.9" /><path d="M10 399c3-3 8-3 11-1" fill="none" stroke="#5a9ac0" stroke-width="1" /><path d="M9 421l8-5 5 9-8 5z" fill="#cfe6f0" stroke="#6a9ab8" stroke-width="0.9" /><path d="M12 421l5-3 3 6-5 3z" fill="#e9f4f8" stroke="#9ac0d8" stroke-width="0.8" /><path d="M9 441l8-7 5 8-8 7z" fill="#d5e4ea" stroke="#3a4a5a" stroke-width="1.1" /><path d="M12 442l6-4" fill="none" stroke="#8ab0c0" stroke-width="0.8" /><path d="M9.500 458l6-5 6.500 8-6 4z" fill="#d8c5dc" stroke="#a08ab0" stroke-width="0.9" /><path d="M11 455l8 9" fill="none" stroke="#7a5a9a" stroke-width="1.4" /><path d="M9.500 475l6-4 6.500 7-6 4z" fill="#c5e0ec" stroke="#5a9ab8" stroke-width="0.9" /><path d="M10 472c4-2 8 0 11 4" fill="none" stroke="#3a7aa0" stroke-width="1.1" /><text x="8.300" y="503.500" font-family="Liberation Serif,serif" font-size="20" fill="#e08a2a">A</text><text x="9" y="519" font-family="Liberation Serif,serif" font-size="8.500" font-weight="bold" font-style="italic" fill="#6a2a9a" transform="rotate(-32 9 519)">Tex</text><path d="M9 538.500c2-6 5-5 7-7s3-4 6-5.500" fill="none" stroke="#8ab0d0" stroke-width="1.1" /><path d="M8.500 549v5a4.500 2 0 0 0 9 0v-5" fill="#c9c9c9" stroke="#444" stroke-width=".8"/><ellipse cx="13" cy="549" rx="4.500" ry="2" fill="#e4e4e4" stroke="#444" stroke-width=".8"/><path d="M11 552l5-4" stroke="#333" stroke-width=".8"/><path d="M15 547c2-3 5-3 6-1M19 543.500l2 2.500-3 1" fill="none" stroke="#e09a5a" stroke-width="1" /><path d="M9 562.500v8.500M4.800 566.800h8.500" fill="none" stroke="#5ab0b8" stroke-width="1" /><path d="M18 562.500l9 9M27 562.500l-9 9" fill="none" stroke="#7a9ab8" stroke-width="1" /><path d="M4.500 581c0-5 8-5 8 0v2h-3v-2h-2v2h-3z" fill="#7a9ab0" stroke="#3a5a70" stroke-width=".6"/><path d="M18 578l6-3 3 6-6 4z" fill="#4a9ad0" stroke="#2a6a9a" stroke-width="0.8" /><path d="M20 579l4 4" fill="none" stroke="#cfe6f4" stroke-width="0.9" /><ellipse cx="8" cy="596" rx="3.800" ry="3" fill="#e4e8ea" stroke="#6a7a80" stroke-width=".8"/><path d="M8 589.500v5M6 591h5" stroke="#6a8a98" stroke-width=".8"/><path d="M18.500 590.500c3 0 4 2 4 4l4 3M22.500 594.500l-4 4" fill="none" stroke="#8a9a7a" stroke-width="1.2" /><circle cx="22.500" cy="594.500" r="1.500" fill="#c9d5b0" stroke="#6a7a5a" stroke-width=".6"/><path d="M8 610.300v3l-2-1.500z" fill="#222"/></svg>
<div class="a" style="left:4px;top:602px;width:24px;height:1px;background:#e9e9e9;"></div>
<div class="a" style="left:30.2px;top:118px;width:0.6px;height:498px;background:#e4e4e4;"></div>

<div class="a" id="vp"></div>
<div class="a" style="left:30.5px;top:118px;width:62px;height:14.5px;background:#03698f;"></div>
<svg class="a" style="left:33px;top:120.5px;" width="9" height="10" viewBox="0 0 9 10"><path d="M3.500 1h-2v2.500h2v2.500h-2" fill="none" stroke="#e8f1f5" stroke-width=".8"/><path d="M4.500 6.500a2 2 0 0 1 3.500-1M8 7.500a2 2 0 0 1-3.500 1" fill="none" stroke="#e8f1f5" stroke-width=".8"/></svg>
<div class="t" style="left:45px;top:121.4px;font-size:7.6px;color:#fff;">79-1.prt</div>
<svg class="a" style="left:74.8px;top:121.5px;" width="6" height="8" viewBox="0 0 6 8"><rect x=".8" y="1.500" width="4" height="5.500" fill="none" stroke="#fff" stroke-width="1"/><path d="M3 1.500v-1h2.500v5" fill="none" stroke="#fff" stroke-width=".8"/></svg>
<svg class="a" style="left:83.5px;top:122.5px;" width="6" height="6" viewBox="0 0 6 6"><path d="M.8 .8l4.400 4.400M5.200 .8l-4.400 4.400" stroke="#fff" stroke-width="1.300"/></svg>
<svg class="a" style="left:100px;top:364px;" width="80" height="84" viewBox="0 0 80 84"><path d="M5 12.500l9-2.600v1.600l16.500.3 2-1.700v1.700l30 .4v1.800l-30-.1v1.300l-2-1.300-16.500.2v1.500z" fill="#2448dc"/>
<path d="M62.300 15.500l1.600 0 .3 17 1.200 6v9h-1.200l.3 14 1 5v9l-1.600 3-1.400-3z" fill="#3c9c49" opacity=".9"/></svg>
<div class="t" style="left:102.5px;top:367.3px;font-size:5.6px;color:#3456de;font-weight:bold;opacity:.85">ZM</div>
<div class="t" style="left:130px;top:368.3px;font-size:4.8px;color:#3456de;font-weight:bold;opacity:.7">ZC</div>
<div class="t" style="left:162.6px;top:371px;font-size:6.2px;color:#cf3f3c;font-weight:bold;letter-spacing:-.5px">XM</div>
<div class="t" style="left:165.5px;top:410px;font-size:5.2px;color:#4aa556;opacity:.45">YM</div>
<div class="t" style="left:165.5px;top:437.5px;font-size:5.6px;color:#4aa556;opacity:.55">YC</div>
<svg class="a" style="left:218px;top:383px;" width="111" height="90" viewBox="0 0 111 90"><defs>
<linearGradient id="cav" x1="0" y1="0" x2="0" y2="1"><stop offset="0" stop-color="#55666e"/><stop offset=".06" stop-color="#788991"/><stop offset=".15" stop-color="#a0b0b7"/><stop offset=".27" stop-color="#b8c7cc"/><stop offset=".372" stop-color="#b7c6cc"/><stop offset=".373" stop-color="#adbcc3"/><stop offset=".595" stop-color="#b0bfc6"/><stop offset=".596" stop-color="#b7c6cc"/><stop offset=".82" stop-color="#cfdbe0"/><stop offset=".95" stop-color="#bccbd0"/><stop offset="1" stop-color="#8fa0a8"/></linearGradient>
<linearGradient id="endc" x1="0" y1="0" x2="1" y2="0"><stop offset="0" stop-color="#b9c8cd" stop-opacity="0"/><stop offset=".35" stop-color="#a9b9c0" stop-opacity=".6"/><stop offset=".8" stop-color="#84959d"/><stop offset="1" stop-color="#71828a"/></linearGradient>
<radialGradient id="spot" cx=".5" cy=".5" r=".5"><stop offset="0" stop-color="#e4ecef"/><stop offset="1" stop-color="#c6d3d8" stop-opacity="0"/></radialGradient>
<radialGradient id="spot2" cx=".5" cy=".5" r=".5"><stop offset="0" stop-color="#c6d3d8"/><stop offset="1" stop-color="#bccbd0" stop-opacity="0"/></radialGradient>
<linearGradient id="ledge" x1="0" y1="0" x2="1" y2="0"><stop offset="0" stop-color="#6f7c82"/><stop offset=".45" stop-color="#c9d3d7"/><stop offset="1" stop-color="#a3b1b7"/></linearGradient>
<clipPath id="cavc"><path d="M.9 15.300c10-5.500 18-8.100 30-8.100h42.300c19 0 29.600 12 29.600 27v19.500c0 15-11 29-26.300 29h-75.600z"/></clipPath>
</defs>
<rect x=".9" y="1.200" width="108.100" height="87.200" fill="#b8c8cd"/>
<g clip-path="url(#cavc)">
<rect x="0" y="7" width="104" height="76" fill="url(#cav)"/>
<ellipse cx="18" cy="23" rx="20" ry="6" fill="url(#spot2)"/>
<rect x="67.100" y="7" width="29" height="76" fill="url(#endc)"/>
<path d="M78 7.200c17 2 25 12 25 27v19.500c0 15-9 26-26.500 29 13-5 19.500-15 19.500-29v-19.500c0-13-5-22-18-27z" fill="#7f9098"/>
<path d="M103 34v19.500h-7v-19.500z" fill="#6f8088"/>
<ellipse cx="75" cy="62" rx="6" ry="8" fill="url(#spot)"/>
</g>
<path d="M.9 15.300c10-5.500 18-8.100 30-8.100h42.300c19 0 29.600 12 29.600 27v19.500c0 15-11 29-26.300 29h-10" fill="none" stroke="#46535a" stroke-width=".7"/>
<path d="M78 7.200c13 5 18 14 18 27v19.500c0 14-6.500 24-19.500 29" fill="none" stroke="#5d6c73" stroke-width=".5"/>
<path d="M.9 35.300h102M.9 52.200h102M67.100 7.200v75.500" stroke="#46535a" stroke-width=".6" fill="none"/>
<path d="M104.100 1.200v87.200" stroke="#6d7b82" stroke-width=".6"/>
<rect x="104.400" y="1.200" width="4.600" height="87.200" fill="#bfced3"/>
<rect x=".9" y="82.700" width="35.800" height="5.700" fill="url(#ledge)"/><path d="M.9 82.700h65M36.700 82.700v5.700" fill="none" stroke="#5d6a70" stroke-width=".5"/>
<rect x=".9" y="1.200" width="108.100" height="87.200" fill="none" stroke="#93a2a8" stroke-width=".5"/></svg>
<svg class="a" style="left:351.4px;top:476.4px;" width="22" height="22" viewBox="0 0 22 22"><circle cx="11" cy="11" r="5.600" fill="none" stroke="#4a4a4a" stroke-width=".7"/><circle cx="11" cy="11" r="4.700" fill="none" stroke="#9a9a9a" stroke-width=".5"/><path d="M11 2.400v17.600M1.500 11h19" stroke="#3c3c3c" stroke-width="2.200"/><path d="M11 3v16.400M2.200 11h17.600" stroke="#8c8c8c" stroke-width=".9"/><circle cx="11" cy="11" r=".8" fill="#c5c5c5"/></svg>
<div class="a" style="left:79.5px;top:540.7px;width:24.3px;height:24.7px;background:transparent;border:1px solid #adadad"></div>
<svg class="a" style="left:45px;top:546px;" width="36" height="14" viewBox="0 0 36 14"><defs><linearGradient id="bl" x1="0" y1="0" x2="0" y2="1"><stop offset="0" stop-color="#4a72f0"/><stop offset=".5" stop-color="#2344d8"/><stop offset="1" stop-color="#1a2fb8"/></linearGradient></defs><path d="M4.500 7.200l12.300-3.700v2h17.700v3.600h-17.700v2z" fill="url(#bl)"/></svg>
<div class="t" style="left:41.6px;top:549.6px;font-size:6.3px;color:#6464b0;font-style:italic">Z</div>
<svg class="a" style="left:85px;top:565px;" width="13" height="32" viewBox="0 0 13 32"><defs><linearGradient id="gl" x1="0" y1="0" x2="1" y2="0"><stop offset="0" stop-color="#55b05e"/><stop offset=".5" stop-color="#3a9f45"/><stop offset="1" stop-color="#2f8a3a"/></linearGradient></defs><path d="M3.800 .4h5v18h.8l-1.300 10h-4l-1.300-10h.8z" fill="url(#gl)"/></svg>
<div class="t" style="left:89.3px;top:594.5px;font-size:5px;color:#7a9a6a;opacity:.6">Y</div>

<div class="a" style="left:579px;top:121px;width:18.4px;height:18px;background:#cfe4ee;"></div>
<svg class="a" style="left:580.3px;top:122.3px" width="15.4" height="15.4" viewBox="0 0 14 14"><rect x="1" y="1" width="5" height="4.500" fill="#dfe6f2" stroke="#5a6b8c" stroke-width=".8"/><rect x="4.500" y="3.800" width="4.500" height="4.500" fill="#dfe6f2" stroke="#5a6b8c" stroke-width=".8"/><path d="M9 6v6h3M9 9h3" fill="none" stroke="#3b4fa0" stroke-width=".9"/><rect x="10.500" y="7.800" width="2.500" height="2" fill="#3b4fa0"/><rect x="10.500" y="11" width="2.500" height="2" fill="#3b4fa0"/></svg>
<svg class="a" style="left:580.3px;top:141.3px" width="15.4" height="15.4" viewBox="0 0 14 14"><rect x="5" y="1" width="3.500" height="5" fill="#8a6b3a"/><rect x="6" y="1" width="1.200" height="5" fill="#3b3b3b"/><path d="M6.800 6v2M3 8h8M3 8v1.500M11 8v1.500" stroke="#44548c" stroke-width=".8" fill="none"/><rect x="1" y="8.500" width="4.500" height="4.500" fill="#4e62ad"/><rect x="8.500" y="8.500" width="4.500" height="4.500" fill="#4e62ad"/><rect x="2" y="9" width="1.300" height="3.500" fill="#a9b5e0"/><rect x="9.500" y="9" width="1.300" height="3.500" fill="#a9b5e0"/></svg>
<svg class="a" style="left:580.3px;top:159.3px" width="15.4" height="15.4" viewBox="0 0 14 14"><circle cx="5" cy="5" r="4" fill="#7d7fb5"/><circle cx="3.800" cy="3.800" r="2" fill="#c9b2d0"/><path d="M1.500 6a4 4 0 0 0 6 2z" fill="#e0a040"/><path d="M9.500 5v7.500h3M9.500 9h3" fill="none" stroke="#3b4fa0" stroke-width=".9"/><rect x="10.800" y="7.800" width="2.500" height="2.200" fill="#3b4fa0"/><rect x="10.800" y="11.300" width="2.500" height="2.200" fill="#3b4fa0"/></svg>
<svg class="a" style="left:580.3px;top:177.3px" width="15.4" height="15.4" viewBox="0 0 14 14"><path d="M1 1v7h9v-7M1 3.500l2.200-1.500 2.300 1.500 2.200-1.500 2.300 1.500M1 5.800h9" fill="none" stroke="#3b67a8" stroke-width=".9"/><path d="M10 6v6.500h3M10 9.500h3" fill="none" stroke="#3b4fa0" stroke-width=".9"/><rect x="11" y="8.300" width="2.500" height="2.200" fill="#3b4fa0"/><rect x="11" y="11.500" width="2.500" height="2.200" fill="#3b4fa0"/></svg>
<svg class="a" style="left:580.3px;top:195.3px" width="15.4" height="15.4" viewBox="0 0 14 14"><rect x="1.500" y="1.500" width="5.500" height="5.500" fill="#cfd3d6" stroke="#444" stroke-width=".8"/><rect x="4.500" y="4" width="6.500" height="5" fill="#b9bec3" stroke="#444" stroke-width=".8"/><circle cx="9.5" cy="10" r="3.6" fill="#fff" stroke="#3a3a3a" stroke-width=".9"/><path d="M7.5 10h4M9.5 8v4" stroke="#3a3a3a" stroke-width=".8"/></svg>
<svg class="a" style="left:580.3px;top:213.3px" width="15.4" height="15.4" viewBox="0 0 14 14"><rect x="1" y="1" width="5" height="11" fill="#e8882f"/><rect x="1" y="1" width="1.500" height="11" fill="#f3a85c"/><path d="M7 5l6-2 .5 1.500-6 2z" fill="#9a9fa4"/><circle cx="9.5" cy="10" r="3.6" fill="#fff" stroke="#3a3a3a" stroke-width=".9"/><path d="M7.5 10h4M9.5 8v4" stroke="#3a3a3a" stroke-width=".8"/></svg>
<svg class="a" style="left:580.3px;top:231.8px" width="15.4" height="15.4" viewBox="0 0 14 14"><path d="M1 6l3.500-3 0 2 3 0 0 5-3 0 0 2z" fill="#ee8a22"/><path d="M7 1l2.500 1 3.500 7-2 2z" fill="#84898e"/><circle cx="9.5" cy="10" r="3.6" fill="#fff" stroke="#3a3a3a" stroke-width=".9"/><path d="M7.5 10h4M9.5 8v4" stroke="#3a3a3a" stroke-width=".8"/></svg>
<svg class="a" style="left:580.3px;top:250.3px" width="15.4" height="15.4" viewBox="0 0 14 14"><rect x="1" y="4" width="5" height="9" fill="#e8882f"/><rect x="1" y="4" width="1.500" height="9" fill="#f3a85c"/><rect x="7.500" y="1" width="4.500" height="7" fill="#8a8f94"/><rect x="7.500" y="1" width="4.500" height="1.500" fill="#5f6468"/><circle cx="10" cy="10.5" r="3.2" fill="#fff" stroke="#3a3a3a" stroke-width=".9"/><path d="M8 10.5h4M10 8.5v4" stroke="#3a3a3a" stroke-width=".8"/></svg>
<svg class="a" style="left:580.3px;top:268.8px" width="15.4" height="15.4" viewBox="0 0 14 14"><path d="M2 6l5-3 5 2v5l-5 3-5-2z" fill="#f1f2f3" stroke="#dcdfe2" stroke-width=".8"/><circle cx="8.500" cy="8.500" r="2.800" fill="#fff" stroke="#dcdfe2" stroke-width=".8"/></svg>
<svg class="a" style="left:580.3px;top:286.3px" width="15.4" height="15.4" viewBox="0 0 14 14"><path d="M3 5l4-3 4 2v3l-4 3-4-2z" fill="#f1f2f3" stroke="#dcdfe2" stroke-width=".8"/><circle cx="8" cy="9" r="3" fill="#fff" stroke="#dcdfe2" stroke-width=".8"/><path d="M8 7.500v1.500h1.500" stroke="#dcdfe2" stroke-width=".7" fill="none"/></svg>
<svg class="a" style="left:580.3px;top:304.3px" width="15.4" height="15.4" viewBox="0 0 14 14"><path d="M2 2h4v4h-4zM4 6v5h4M8 11l4-5M10.500 5.500l2-.5-.3 2" fill="none" stroke="#dcdfe2" stroke-width=".9"/></svg>
<svg class="a" style="left:580.3px;top:323.3px" width="15.4" height="15.4" viewBox="0 0 14 14"><rect x="1.500" y="2" width="3.500" height="10" fill="#3a3a9a"/><rect x="5" y="1" width="3" height="6" fill="#d8322a"/><rect x="8" y="2" width="2.500" height="5" fill="#e8a02f"/><rect x="4" y="6" width="5" height="6.500" fill="#5a4ab0"/><rect x="5" y="7.500" width="3" height="3.500" fill="#d5d0f0"/><rect x="9.500" y="7" width="3.500" height="3" fill="#9aa0a5"/></svg>
<svg class="a" style="left:580.3px;top:340.3px" width="15.4" height="15.4" viewBox="0 0 14 14"><rect x="2" y="2" width="4" height="9" fill="#e9ebed"/><path d="M7 4v8M7 8h5M10.500 6l2 2-2 2" stroke="#dcdfe2" stroke-width="1" fill="none"/></svg>
<svg class="a" style="left:580.3px;top:359.3px" width="15.4" height="15.4" viewBox="0 0 14 14"><rect x="2" y="2" width="4" height="10" fill="#e9ebed"/><path d="M7 4h5M7 4v4M9 7h3v5h-3z" stroke="#dcdfe2" stroke-width=".9" fill="none"/></svg>
<svg class="a" style="left:580.3px;top:378.3px" width="15.4" height="15.4" viewBox="0 0 14 14"><rect x="1.500" y="1.500" width="6" height="6" fill="#e4e4e4" stroke="#444" stroke-width=".8"/><circle cx="8" cy="8" r="4.500" fill="#b5c9a0" stroke="#4a5a45" stroke-width=".8"/><circle cx="7" cy="7" r="2" fill="#dfe9d5"/></svg>
<svg class="a" style="left:580.3px;top:397.3px" width="15.4" height="15.4" viewBox="0 0 14 14"><path d="M1 9l7-7 5 5v5l-7 1z" fill="#d9d9d9" stroke="#333" stroke-width=".9"/><path d="M8 2l-2 11M13 7l-7 6" stroke="#333" stroke-width=".7" fill="none"/><path d="M11 9.500l2 2.500h-2.500z" fill="#222"/></svg>
<svg class="a" style="left:580.3px;top:414.8px" width="15.4" height="15.4" viewBox="0 0 14 14"><path d="M6 1.500h-3v3h3v3h-3v4h3" fill="none" stroke="#dcdfe2" stroke-width=".9"/><rect x="7.500" y="6.500" width="4.500" height="5" rx="1" fill="none" stroke="#dcdfe2" stroke-width=".9"/></svg>
<svg class="a" style="left:580.3px;top:433.7px" width="15.4" height="15.4" viewBox="0 0 14 14"><rect x="1" y="1" width="12" height="12" fill="#3a5fb0"/><rect x="2.500" y="3" width="9" height="8" fill="#7ab0e0"/><circle cx="7.500" cy="7.500" r="3.300" fill="#d5e07a"/><circle cx="6.500" cy="7" r="2" fill="#8ac070"/><rect x="1" y="1" width="4" height="3" fill="#2a3a80"/></svg>
<svg class="a" style="left:580.3px;top:452.0px" width="15.4" height="15.4" viewBox="0 0 14 14"><path d="M6 1.500h-3.500v3h3.500v3h-3.500v4h3.500" fill="none" stroke="#333" stroke-width=".9"/><rect x="7.500" y="6.500" width="5" height="5.500" rx=".8" fill="#fff" stroke="#333" stroke-width=".9"/><path d="M6 9h1.500" stroke="#333" stroke-width=".8"/><path d="M11 8.500l1.500 1-1.500 1z" fill="#333"/></svg>
<svg class="a" style="left:580.3px;top:469.3px" width="15.4" height="15.4" viewBox="0 0 14 14"><path d="M1.500 1.500h9l2 2v9h-11z" fill="#f1f1f1" stroke="#444" stroke-width=".9"/><rect x="4" y="1.500" width="5.500" height="3.500" fill="#fff" stroke="#444" stroke-width=".7"/><rect x="3.500" y="7.500" width="7" height="5" fill="#fff" stroke="#444" stroke-width=".7"/><path d="M5 9.500h4" stroke="#666" stroke-width=".6"/></svg>
<svg class="a" style="left:580.3px;top:488.3px" width="15.4" height="15.4" viewBox="0 0 14 14"><path d="M3 1.500h-1.500v11h1.500M11 1.500h1.500v11h-1.500" fill="none" stroke="#e0a95a" stroke-width="1"/><ellipse cx="7" cy="7" rx="4.500" ry="2.800" fill="#fff" stroke="#333" stroke-width=".8"/><circle cx="7" cy="7" r="1.700" fill="#222"/></svg>
<svg class="a" style="left:580.3px;top:506.90000000000003px" width="15.4" height="15.4" viewBox="0 0 14 14"><ellipse cx="8" cy="9.500" rx="4.500" ry="2.700" fill="#fff" stroke="#333" stroke-width=".8"/><circle cx="8" cy="9.500" r="1.600" fill="#222"/><path d="M1.500 11.500l11-10" stroke="#333" stroke-width="1.100"/><path d="M2 4.500c2-2 4-2 5.500-1M2 7c1.500-1 3-1 4-.5" stroke="#555" stroke-width=".8" fill="none"/></svg>
<svg class="a" style="left:580.3px;top:524.3px" width="15.4" height="15.4" viewBox="0 0 14 14"><path d="M1 9l4-2v-3.500l2.500-1.500 2 1v3.500l4 2v2l-5 2.500-7.500-3z" fill="#8f9397"/><path d="M1 9l7 2.800 5.500-2.800M5 7l2.500-1.300 2 .8" fill="none" stroke="#cfd2d5" stroke-width=".7"/></svg>
<div class="dot" style="left:582px;top:611px;background:#333;width:2px;height:2.500px"></div>

<div class="a" style="left:597.5px;top:118px;width:1px;height:499px;background:#dcdcdc;"></div>
<div class="a" style="left:605px;top:123.5px;width:7px;height:6.5px;background:#fff;border:1px solid #333"></div>
<div class="t" style="left:618px;top:124.6px;font-size:6.9px;color:#2a2a2a;font-weight:400">工序导航器 - 程序顺序</div>
<div class="a" style="left:603px;top:134.7px;width:174px;height:12.3px;background:#efefef;"></div>
<div class="t" style="left:607.8px;top:138.3px;font-size:6.6px;color:#444;font-weight:400">名称</div>
<div class="t" style="left:722px;top:138.3px;font-size:6.6px;color:#444;font-weight:400">换刀</div>
<div class="t" style="left:746px;top:138.3px;font-size:6.6px;color:#444;font-weight:400">刀轨</div>
<div class="t" style="left:768.3px;top:138.3px;font-size:6.6px;color:#444;font-weight:400">刀</div>
<div class="a" style="left:717.5px;top:135.5px;width:1px;height:11px;background:#fafafa;"></div>
<div class="a" style="left:742px;top:135.5px;width:1px;height:11px;background:#fafafa;"></div>
<div class="a" style="left:765px;top:135.5px;width:1px;height:11px;background:#fafafa;"></div>
<div class="a" style="left:604px;top:147.1px;width:173px;height:1px;background:#f5f5f5;"></div>
<div class="a" style="left:604px;top:158.5px;width:173px;height:1px;background:#f5f5f5;"></div>
<div class="a" style="left:604px;top:169.9px;width:173px;height:1px;background:#f5f5f5;"></div>
<div class="a" style="left:604px;top:181.4px;width:173px;height:1px;background:#f5f5f5;"></div>
<div class="a" style="left:604px;top:192.8px;width:173px;height:1px;background:#f5f5f5;"></div>
<div class="a" style="left:604px;top:204.2px;width:173px;height:1px;background:#f5f5f5;"></div>
<div class="a" style="left:604px;top:215.7px;width:173px;height:1px;background:#f5f5f5;"></div>
<div class="a" style="left:604px;top:227.1px;width:173px;height:1px;background:#f5f5f5;"></div>
<div class="a" style="left:604px;top:238.5px;width:173px;height:1px;background:#f5f5f5;"></div>
<div class="a" style="left:604px;top:250.0px;width:173px;height:1px;background:#f5f5f5;"></div>
<div class="a" style="left:604px;top:261.4px;width:173px;height:1px;background:#f5f5f5;"></div>
<div class="a" style="left:604px;top:272.8px;width:173px;height:1px;background:#f5f5f5;"></div>
<div class="a" style="left:604px;top:284.2px;width:173px;height:1px;background:#f5f5f5;"></div>
<div class="a" style="left:604px;top:295.7px;width:173px;height:1px;background:#f5f5f5;"></div>
<div class="a" style="left:604px;top:307.1px;width:173px;height:1px;background:#f5f5f5;"></div>
<div class="a" style="left:604px;top:318.5px;width:173px;height:1px;background:#f5f5f5;"></div>
<div class="a" style="left:604px;top:330.0px;width:173px;height:1px;background:#f5f5f5;"></div>
<div class="a" style="left:604px;top:341.4px;width:173px;height:1px;background:#f5f5f5;"></div>
<div class="a" style="left:604px;top:352.8px;width:173px;height:1px;background:#f5f5f5;"></div>
<div class="a" style="left:604px;top:364.3px;width:173px;height:1px;background:#f5f5f5;"></div>
<div class="a" style="left:604px;top:375.7px;width:173px;height:1px;background:#f5f5f5;"></div>
<div class="a" style="left:604px;top:387.1px;width:173px;height:1px;background:#f5f5f5;"></div>
<div class="a" style="left:604px;top:398.5px;width:173px;height:1px;background:#f5f5f5;"></div>
<div class="a" style="left:604px;top:410.0px;width:173px;height:1px;background:#f5f5f5;"></div>
<div class="a" style="left:604px;top:421.4px;width:173px;height:1px;background:#f5f5f5;"></div>
<div class="a" style="left:604px;top:432.8px;width:173px;height:1px;background:#f5f5f5;"></div>
<div class="a" style="left:604px;top:444.3px;width:173px;height:1px;background:#f5f5f5;"></div>
<div class="a" style="left:604px;top:455.7px;width:173px;height:1px;background:#f5f5f5;"></div>
<div class="a" style="left:604px;top:467.1px;width:173px;height:1px;background:#f5f5f5;"></div>
<div class="a" style="left:604px;top:478.6px;width:173px;height:1px;background:#f5f5f5;"></div>
<div class="a" style="left:604px;top:490.0px;width:173px;height:1px;background:#f5f5f5;"></div>
<div class="a" style="left:604px;top:501.4px;width:173px;height:1px;background:#f5f5f5;"></div>
<div class="a" style="left:604px;top:512.8px;width:173px;height:1px;background:#f5f5f5;"></div>
<div class="a" style="left:604px;top:524.3px;width:173px;height:1px;background:#f5f5f5;"></div>
<div class="a" style="left:604px;top:535.7px;width:173px;height:1px;background:#f5f5f5;"></div>
<div class="a" style="left:604px;top:547.1px;width:173px;height:1px;background:#f5f5f5;"></div>
<div class="a" style="left:604px;top:558.6px;width:173px;height:1px;background:#f5f5f5;"></div>
<div class="a" style="left:742px;top:147px;width:1px;height:426px;background:#f3f3f3;"></div>
<div class="a" style="left:765px;top:147px;width:1px;height:426px;background:#f3f3f3;"></div>
<div class="a" style="left:717.5px;top:147px;width:1.8px;height:425.5px;background:#939393;"></div>
<div class="t" style="left:606.4px;top:150.0px;font-size:6.85px;color:#333;">NC_PROGRAM</div>
<svg class="a" style="left:615px;top:160.23000000000002px;" width="9" height="8" viewBox="0 0 9 8"><path d="M.5 1h3l.8 1h4.200v5.500h-8z" fill="#7fb2bc" stroke="#3a6f7c" stroke-width=".6"/><rect x="1.500" y="3" width="4.500" height="3.500" fill="#e0f0f3"/></svg>
<div class="t" style="left:628px;top:160.63000000000002px;font-size:6.4px;color:#333;">未用项</div>
<svg class="a" style="left:614.5px;top:171.16000000000003px;" width="10" height="9" viewBox="0 0 10 9"><path d="M1 5l2.800 3 5.500-7" fill="none" stroke="#4fbf5c" stroke-width="1.200"/></svg>
<svg class="a" style="left:624px;top:171.66000000000003px;" width="9" height="8" viewBox="0 0 9 8"><path d="M.5 1h3l.8 1h4.200v5.500h-8z" fill="#7fb2bc" stroke="#3a6f7c" stroke-width=".6"/><rect x="1.500" y="3" width="4.500" height="3.500" fill="#e0f0f3"/></svg>
<div class="t" style="left:635.5px;top:172.86px;font-size:6.85px;color:#333;">DAOGUI</div>
<svg class="a" style="left:606.5px;top:184.09px;" width="6" height="6" viewBox="0 0 6 6"><rect x=".5" y=".5" width="5" height="5" fill="#fff" stroke="#cfcfcf" stroke-width=".5"/><path d="M1.500 3h3" stroke="#444" stroke-width=".8"/></svg>
<div class="a" style="left:618.3px;top:183.09px;width:1px;height:8px;background:#ecd9a0;"></div>
<svg class="a" style="left:624px;top:183.09px;" width="9" height="8" viewBox="0 0 9 8"><path d="M.5 1h3l.8 1h4.200v5.500h-8z" fill="#7fb2bc" stroke="#3a6f7c" stroke-width=".6"/><rect x="1.500" y="3" width="4.500" height="3.500" fill="#e0f0f3"/></svg>
<div class="t" style="left:635.5px;top:184.29px;font-size:6.85px;color:#333;">A</div>
<div class="a" style="left:611.5px;top:161.23000000000002px;width:0.6px;height:22.859999999999985px;background:#e0e0e0;"></div>
<div class="a" style="left:621.3px;top:192.09px;width:0.6px;height:223.6px;background:#dedede;"></div>
<div class="a" style="left:621.3px;top:198.52px;width:4px;height:0.6px;background:#e2e2e2;"></div>
<svg class="a" style="left:625px;top:194.02px;" width="10" height="9" viewBox="0 0 10 9"><path d="M1 5l2.800 3 5.500-7" fill="none" stroke="#4fbf5c" stroke-width="1.200"/></svg>
<svg class="a" style="left:634.3px;top:194.52px;" width="9" height="8" viewBox="0 0 9 8"><path d="M.5 1h3l.8 1h4.200v5.500h-8z" fill="#7fb2bc" stroke="#3a6f7c" stroke-width=".6"/><rect x="1.500" y="3" width="4.500" height="3.500" fill="#e0f0f3"/></svg>
<div class="t" style="left:646.3px;top:195.32000000000002px;font-size:6.85px;color:#333;">A01</div>
<div class="a" style="left:621.3px;top:209.95000000000002px;width:4px;height:0.6px;background:#e2e2e2;"></div>
<svg class="a" style="left:625px;top:205.45000000000002px;" width="10" height="9" viewBox="0 0 10 9"><path d="M1 5l2.800 3 5.500-7" fill="none" stroke="#4fbf5c" stroke-width="1.200"/></svg>
<svg class="a" style="left:634.3px;top:205.95000000000002px;" width="9" height="8" viewBox="0 0 9 8"><path d="M.5 1h3l.8 1h4.200v5.500h-8z" fill="#7fb2bc" stroke="#3a6f7c" stroke-width=".6"/><rect x="1.500" y="3" width="4.500" height="3.500" fill="#e0f0f3"/></svg>
<div class="t" style="left:646.3px;top:206.75000000000003px;font-size:6.85px;color:#333;">A02</div>
<div class="a" style="left:621.3px;top:221.38px;width:4px;height:0.6px;background:#e2e2e2;"></div>
<svg class="a" style="left:625px;top:216.88px;" width="10" height="9" viewBox="0 0 10 9"><path d="M1 5l2.800 3 5.500-7" fill="none" stroke="#4fbf5c" stroke-width="1.200"/></svg>
<svg class="a" style="left:634.3px;top:217.38px;" width="9" height="8" viewBox="0 0 9 8"><path d="M.5 1h3l.8 1h4.200v5.500h-8z" fill="#7fb2bc" stroke="#3a6f7c" stroke-width=".6"/><rect x="1.500" y="3" width="4.500" height="3.500" fill="#e0f0f3"/></svg>
<div class="t" style="left:646.3px;top:218.18px;font-size:6.85px;color:#333;">A03</div>
<div class="a" style="left:621.3px;top:232.81px;width:4px;height:0.6px;background:#e2e2e2;"></div>
<svg class="a" style="left:625px;top:228.31px;" width="10" height="9" viewBox="0 0 10 9"><path d="M1 5l2.800 3 5.500-7" fill="none" stroke="#4fbf5c" stroke-width="1.200"/></svg>
<svg class="a" style="left:634.3px;top:228.81px;" width="9" height="8" viewBox="0 0 9 8"><path d="M.5 1h3l.8 1h4.200v5.500h-8z" fill="#7fb2bc" stroke="#3a6f7c" stroke-width=".6"/><rect x="1.500" y="3" width="4.500" height="3.500" fill="#e0f0f3"/></svg>
<div class="t" style="left:646.3px;top:229.61px;font-size:6.85px;color:#333;">A04</div>
<div class="a" style="left:621.3px;top:244.24px;width:4px;height:0.6px;background:#e2e2e2;"></div>
<svg class="a" style="left:625px;top:239.74px;" width="10" height="9" viewBox="0 0 10 9"><path d="M1 5l2.800 3 5.500-7" fill="none" stroke="#4fbf5c" stroke-width="1.200"/></svg>
<svg class="a" style="left:634.3px;top:240.24px;" width="9" height="8" viewBox="0 0 9 8"><path d="M.5 1h3l.8 1h4.200v5.500h-8z" fill="#7fb2bc" stroke="#3a6f7c" stroke-width=".6"/><rect x="1.500" y="3" width="4.500" height="3.500" fill="#e0f0f3"/></svg>
<div class="t" style="left:646.3px;top:241.04000000000002px;font-size:6.85px;color:#333;">A05</div>
<div class="a" style="left:621.3px;top:255.67000000000002px;width:4px;height:0.6px;background:#e2e2e2;"></div>
<svg class="a" style="left:625px;top:251.17000000000002px;" width="10" height="9" viewBox="0 0 10 9"><path d="M1 5l2.800 3 5.500-7" fill="none" stroke="#4fbf5c" stroke-width="1.200"/></svg>
<svg class="a" style="left:634.3px;top:251.67000000000002px;" width="9" height="8" viewBox="0 0 9 8"><path d="M.5 1h3l.8 1h4.200v5.500h-8z" fill="#7fb2bc" stroke="#3a6f7c" stroke-width=".6"/><rect x="1.500" y="3" width="4.500" height="3.500" fill="#e0f0f3"/></svg>
<div class="t" style="left:646.3px;top:252.47000000000003px;font-size:6.85px;color:#333;">A06</div>
<div class="a" style="left:621.3px;top:267.1px;width:4px;height:0.6px;background:#e2e2e2;"></div>
<svg class="a" style="left:625px;top:262.6px;" width="10" height="9" viewBox="0 0 10 9"><path d="M1 5l2.800 3 5.500-7" fill="none" stroke="#4fbf5c" stroke-width="1.200"/></svg>
<svg class="a" style="left:634.3px;top:263.1px;" width="9" height="8" viewBox="0 0 9 8"><path d="M.5 1h3l.8 1h4.200v5.500h-8z" fill="#7fb2bc" stroke="#3a6f7c" stroke-width=".6"/><rect x="1.500" y="3" width="4.500" height="3.500" fill="#e0f0f3"/></svg>
<div class="t" style="left:646.3px;top:263.90000000000003px;font-size:6.85px;color:#333;">A07</div>
<div class="a" style="left:621.3px;top:278.53px;width:4px;height:0.6px;background:#e2e2e2;"></div>
<svg class="a" style="left:625px;top:274.03px;" width="10" height="9" viewBox="0 0 10 9"><path d="M1 5l2.800 3 5.500-7" fill="none" stroke="#4fbf5c" stroke-width="1.200"/></svg>
<svg class="a" style="left:634.3px;top:274.53px;" width="9" height="8" viewBox="0 0 9 8"><path d="M.5 1h3l.8 1h4.200v5.500h-8z" fill="#7fb2bc" stroke="#3a6f7c" stroke-width=".6"/><rect x="1.500" y="3" width="4.500" height="3.500" fill="#e0f0f3"/></svg>
<div class="t" style="left:646.3px;top:275.33px;font-size:6.85px;color:#333;">A08</div>
<div class="a" style="left:621.3px;top:289.96000000000004px;width:4px;height:0.6px;background:#e2e2e2;"></div>
<svg class="a" style="left:625px;top:285.46000000000004px;" width="10" height="9" viewBox="0 0 10 9"><path d="M1 5l2.800 3 5.500-7" fill="none" stroke="#4fbf5c" stroke-width="1.200"/></svg>
<svg class="a" style="left:634.3px;top:285.96000000000004px;" width="9" height="8" viewBox="0 0 9 8"><path d="M.5 1h3l.8 1h4.200v5.500h-8z" fill="#7fb2bc" stroke="#3a6f7c" stroke-width=".6"/><rect x="1.500" y="3" width="4.500" height="3.500" fill="#e0f0f3"/></svg>
<div class="t" style="left:646.3px;top:286.76000000000005px;font-size:6.85px;color:#333;">A09</div>
<div class="a" style="left:621.3px;top:301.39px;width:4px;height:0.6px;background:#e2e2e2;"></div>
<svg class="a" style="left:625px;top:296.89px;" width="10" height="9" viewBox="0 0 10 9"><path d="M1 5l2.800 3 5.500-7" fill="none" stroke="#4fbf5c" stroke-width="1.200"/></svg>
<svg class="a" style="left:634.3px;top:297.39px;" width="9" height="8" viewBox="0 0 9 8"><path d="M.5 1h3l.8 1h4.200v5.500h-8z" fill="#7fb2bc" stroke="#3a6f7c" stroke-width=".6"/><rect x="1.500" y="3" width="4.500" height="3.500" fill="#e0f0f3"/></svg>
<div class="t" style="left:646.3px;top:298.19px;font-size:6.85px;color:#333;">A10</div>
<div class="a" style="left:621.3px;top:312.82px;width:4px;height:0.6px;background:#e2e2e2;"></div>
<svg class="a" style="left:625px;top:308.32px;" width="10" height="9" viewBox="0 0 10 9"><path d="M1 5l2.800 3 5.500-7" fill="none" stroke="#4fbf5c" stroke-width="1.200"/></svg>
<svg class="a" style="left:634.3px;top:308.82px;" width="9" height="8" viewBox="0 0 9 8"><path d="M.5 1h3l.8 1h4.200v5.500h-8z" fill="#7fb2bc" stroke="#3a6f7c" stroke-width=".6"/><rect x="1.500" y="3" width="4.500" height="3.500" fill="#e0f0f3"/></svg>
<div class="t" style="left:646.3px;top:309.62px;font-size:6.85px;color:#333;">A11</div>
<div class="a" style="left:621.3px;top:324.25px;width:4px;height:0.6px;background:#e2e2e2;"></div>
<svg class="a" style="left:625px;top:319.75px;" width="10" height="9" viewBox="0 0 10 9"><path d="M1 5l2.800 3 5.500-7" fill="none" stroke="#4fbf5c" stroke-width="1.200"/></svg>
<svg class="a" style="left:634.3px;top:320.25px;" width="9" height="8" viewBox="0 0 9 8"><path d="M.5 1h3l.8 1h4.200v5.500h-8z" fill="#7fb2bc" stroke="#3a6f7c" stroke-width=".6"/><rect x="1.500" y="3" width="4.500" height="3.500" fill="#e0f0f3"/></svg>
<div class="t" style="left:646.3px;top:321.05px;font-size:6.85px;color:#333;">A12</div>
<div class="a" style="left:621.3px;top:335.68px;width:4px;height:0.6px;background:#e2e2e2;"></div>
<svg class="a" style="left:625px;top:331.18px;" width="10" height="9" viewBox="0 0 10 9"><path d="M1 5l2.800 3 5.500-7" fill="none" stroke="#4fbf5c" stroke-width="1.200"/></svg>
<svg class="a" style="left:634.3px;top:331.68px;" width="9" height="8" viewBox="0 0 9 8"><path d="M.5 1h3l.8 1h4.200v5.500h-8z" fill="#7fb2bc" stroke="#3a6f7c" stroke-width=".6"/><rect x="1.500" y="3" width="4.500" height="3.500" fill="#e0f0f3"/></svg>
<div class="t" style="left:646.3px;top:332.48px;font-size:6.85px;color:#333;">A13</div>
<div class="a" style="left:621.3px;top:347.11px;width:4px;height:0.6px;background:#e2e2e2;"></div>
<svg class="a" style="left:625px;top:342.61px;" width="10" height="9" viewBox="0 0 10 9"><path d="M1 5l2.800 3 5.500-7" fill="none" stroke="#4fbf5c" stroke-width="1.200"/></svg>
<svg class="a" style="left:634.3px;top:343.11px;" width="9" height="8" viewBox="0 0 9 8"><path d="M.5 1h3l.8 1h4.200v5.500h-8z" fill="#7fb2bc" stroke="#3a6f7c" stroke-width=".6"/><rect x="1.500" y="3" width="4.500" height="3.500" fill="#e0f0f3"/></svg>
<div class="t" style="left:646.3px;top:343.91px;font-size:6.85px;color:#333;">A14</div>
<div class="a" style="left:621.3px;top:358.54px;width:4px;height:0.6px;background:#e2e2e2;"></div>
<svg class="a" style="left:625px;top:354.04px;" width="10" height="9" viewBox="0 0 10 9"><path d="M1 5l2.800 3 5.500-7" fill="none" stroke="#4fbf5c" stroke-width="1.200"/></svg>
<svg class="a" style="left:634.3px;top:354.54px;" width="9" height="8" viewBox="0 0 9 8"><path d="M.5 1h3l.8 1h4.200v5.500h-8z" fill="#7fb2bc" stroke="#3a6f7c" stroke-width=".6"/><rect x="1.500" y="3" width="4.500" height="3.500" fill="#e0f0f3"/></svg>
<div class="t" style="left:646.3px;top:355.34000000000003px;font-size:6.85px;color:#333;">A15</div>
<div class="a" style="left:621.3px;top:369.97px;width:4px;height:0.6px;background:#e2e2e2;"></div>
<svg class="a" style="left:625px;top:365.47px;" width="10" height="9" viewBox="0 0 10 9"><path d="M1 5l2.800 3 5.500-7" fill="none" stroke="#4fbf5c" stroke-width="1.200"/></svg>
<svg class="a" style="left:634.3px;top:365.97px;" width="9" height="8" viewBox="0 0 9 8"><path d="M.5 1h3l.8 1h4.200v5.500h-8z" fill="#7fb2bc" stroke="#3a6f7c" stroke-width=".6"/><rect x="1.500" y="3" width="4.500" height="3.500" fill="#e0f0f3"/></svg>
<div class="t" style="left:646.3px;top:366.77000000000004px;font-size:6.85px;color:#333;">A16</div>
<div class="a" style="left:621.3px;top:381.4px;width:4px;height:0.6px;background:#e2e2e2;"></div>
<svg class="a" style="left:625px;top:376.9px;" width="10" height="9" viewBox="0 0 10 9"><path d="M1 5l2.800 3 5.500-7" fill="none" stroke="#4fbf5c" stroke-width="1.200"/></svg>
<svg class="a" style="left:634.3px;top:377.4px;" width="9" height="8" viewBox="0 0 9 8"><path d="M.5 1h3l.8 1h4.200v5.500h-8z" fill="#7fb2bc" stroke="#3a6f7c" stroke-width=".6"/><rect x="1.500" y="3" width="4.500" height="3.500" fill="#e0f0f3"/></svg>
<div class="t" style="left:646.3px;top:378.2px;font-size:6.85px;color:#333;">A17</div>
<div class="a" style="left:621.3px;top:392.83000000000004px;width:4px;height:0.6px;background:#e2e2e2;"></div>
<svg class="a" style="left:625px;top:388.33000000000004px;" width="10" height="9" viewBox="0 0 10 9"><path d="M1 5l2.800 3 5.500-7" fill="none" stroke="#4fbf5c" stroke-width="1.200"/></svg>
<svg class="a" style="left:634.3px;top:388.83000000000004px;" width="9" height="8" viewBox="0 0 9 8"><path d="M.5 1h3l.8 1h4.200v5.500h-8z" fill="#7fb2bc" stroke="#3a6f7c" stroke-width=".6"/><rect x="1.500" y="3" width="4.500" height="3.500" fill="#e0f0f3"/></svg>
<div class="t" style="left:646.3px;top:389.63000000000005px;font-size:6.85px;color:#333;">A18</div>
<div class="a" style="left:621.3px;top:404.26px;width:4px;height:0.6px;background:#e2e2e2;"></div>
<svg class="a" style="left:625px;top:399.76px;" width="10" height="9" viewBox="0 0 10 9"><path d="M1 5l2.800 3 5.500-7" fill="none" stroke="#4fbf5c" stroke-width="1.200"/></svg>
<svg class="a" style="left:634.3px;top:400.26px;" width="9" height="8" viewBox="0 0 9 8"><path d="M.5 1h3l.8 1h4.200v5.500h-8z" fill="#7fb2bc" stroke="#3a6f7c" stroke-width=".6"/><rect x="1.500" y="3" width="4.500" height="3.500" fill="#e0f0f3"/></svg>
<div class="t" style="left:646.3px;top:401.06px;font-size:6.85px;color:#333;">A19</div>
<div class="a" style="left:621.3px;top:415.69px;width:4px;height:0.6px;background:#e2e2e2;"></div>
<svg class="a" style="left:625px;top:411.19px;" width="10" height="9" viewBox="0 0 10 9"><path d="M1 5l2.800 3 5.500-7" fill="none" stroke="#4fbf5c" stroke-width="1.200"/></svg>
<svg class="a" style="left:634.3px;top:411.69px;" width="9" height="8" viewBox="0 0 9 8"><path d="M.5 1h3l.8 1h4.200v5.500h-8z" fill="#7fb2bc" stroke="#3a6f7c" stroke-width=".6"/><rect x="1.500" y="3" width="4.500" height="3.500" fill="#e0f0f3"/></svg>
<div class="t" style="left:646.3px;top:412.49px;font-size:6.85px;color:#333;">A20</div>
<svg class="a" style="left:607px;top:424.12px;" width="6" height="6" viewBox="0 0 6 6"><rect x=".5" y=".5" width="5" height="5" fill="#fff" stroke="#cfcfcf" stroke-width=".5"/><path d="M1.500 3h3M3 1.500v3" stroke="#444" stroke-width=".8"/></svg>
<div class="a" style="left:619.3px;top:422.62px;width:1px;height:9px;background:#ecd9a0;"></div>
<svg class="a" style="left:624px;top:423.12px;" width="9" height="8" viewBox="0 0 9 8"><path d="M.5 1h3l.8 1h4.200v5.500h-8z" fill="#7fb2bc" stroke="#3a6f7c" stroke-width=".6"/><rect x="1.500" y="3" width="4.500" height="3.500" fill="#e0f0f3"/></svg>
<div class="t" style="left:635.5px;top:424.32px;font-size:6.85px;color:#333;">B</div>
<svg class="a" style="left:607px;top:435.55px;" width="6" height="6" viewBox="0 0 6 6"><rect x=".5" y=".5" width="5" height="5" fill="#fff" stroke="#cfcfcf" stroke-width=".5"/><path d="M1.500 3h3M3 1.500v3" stroke="#444" stroke-width=".8"/></svg>
<div class="a" style="left:619.3px;top:434.05px;width:1px;height:9px;background:#ecd9a0;"></div>
<svg class="a" style="left:624px;top:434.55px;" width="9" height="8" viewBox="0 0 9 8"><path d="M.5 1h3l.8 1h4.200v5.500h-8z" fill="#7fb2bc" stroke="#3a6f7c" stroke-width=".6"/><rect x="1.500" y="3" width="4.500" height="3.500" fill="#e0f0f3"/></svg>
<div class="t" style="left:635.5px;top:435.75px;font-size:6.85px;color:#333;">C</div>
<svg class="a" style="left:607px;top:446.98px;" width="6" height="6" viewBox="0 0 6 6"><rect x=".5" y=".5" width="5" height="5" fill="#fff" stroke="#cfcfcf" stroke-width=".5"/><path d="M1.500 3h3M3 1.500v3" stroke="#444" stroke-width=".8"/></svg>
<div class="a" style="left:619.3px;top:445.48px;width:1px;height:9px;background:#ecd9a0;"></div>
<svg class="a" style="left:624px;top:445.98px;" width="9" height="8" viewBox="0 0 9 8"><path d="M.5 1h3l.8 1h4.200v5.500h-8z" fill="#7fb2bc" stroke="#3a6f7c" stroke-width=".6"/><rect x="1.500" y="3" width="4.500" height="3.500" fill="#e0f0f3"/></svg>
<div class="t" style="left:635.5px;top:447.18px;font-size:6.85px;color:#333;">D</div>
<svg class="a" style="left:607px;top:458.41px;" width="6" height="6" viewBox="0 0 6 6"><rect x=".5" y=".5" width="5" height="5" fill="#fff" stroke="#cfcfcf" stroke-width=".5"/><path d="M1.500 3h3M3 1.500v3" stroke="#444" stroke-width=".8"/></svg>
<div class="a" style="left:619.3px;top:456.91px;width:1px;height:9px;background:#ecd9a0;"></div>
<svg class="a" style="left:624px;top:457.41px;" width="9" height="8" viewBox="0 0 9 8"><path d="M.5 1h3l.8 1h4.200v5.500h-8z" fill="#7fb2bc" stroke="#3a6f7c" stroke-width=".6"/><rect x="1.500" y="3" width="4.500" height="3.500" fill="#e0f0f3"/></svg>
<div class="t" style="left:635.5px;top:458.61px;font-size:6.85px;color:#333;">E</div>
<svg class="a" style="left:607px;top:469.84px;" width="6" height="6" viewBox="0 0 6 6"><rect x=".5" y=".5" width="5" height="5" fill="#fff" stroke="#cfcfcf" stroke-width=".5"/><path d="M1.500 3h3M3 1.500v3" stroke="#444" stroke-width=".8"/></svg>
<div class="a" style="left:619.3px;top:468.34px;width:1px;height:9px;background:#ecd9a0;"></div>
<svg class="a" style="left:624px;top:468.84px;" width="9" height="8" viewBox="0 0 9 8"><path d="M.5 1h3l.8 1h4.200v5.500h-8z" fill="#7fb2bc" stroke="#3a6f7c" stroke-width=".6"/><rect x="1.500" y="3" width="4.500" height="3.500" fill="#e0f0f3"/></svg>
<div class="t" style="left:635.5px;top:470.03999999999996px;font-size:6.85px;color:#333;">F</div>
<div class="a" style="left:603px;top:573.5px;width:174px;height:8.7px;background:#ededed;"></div>
<div class="a" style="left:613.6px;top:576.8px;width:53.5px;height:1.5px;background:#777;border-radius:1px"></div>
<div class="a" style="left:603px;top:583.3px;width:175px;height:1.8px;background:#c2c2c2;"></div>
<svg class="a" style="left:608px;top:591px;" width="5" height="6" viewBox="0 0 5 6"><path d="M1 .5l3 2.500-3 2.500z" fill="#2b5f7d"/></svg>
<div class="t" style="left:617.5px;top:590.5px;font-size:7.4px;color:#2a7094;">相关性</div>
<div class="a" style="left:603px;top:600px;width:175px;height:1px;background:#dfdfdf;"></div>
<svg class="a" style="left:608px;top:604.3px;" width="5" height="6" viewBox="0 0 5 6"><path d="M1 .5l3 2.500-3 2.500z" fill="#2b5f7d"/></svg>
<div class="t" style="left:617.5px;top:603.8px;font-size:7.4px;color:#2a7094;">细节</div>
<div class="a" style="left:603px;top:613.3px;width:175px;height:1px;background:#dfdfdf;"></div>
<div class="a" style="left:778.5px;top:118px;width:18.5px;height:499px;background:#d6d6d6;"></div>
<div class="a" style="left:777.5px;top:118px;width:1px;height:499px;background:#e9e9e9;"></div>
<svg class="a" style="left:783.5px;top:119.5px;" width="11" height="11" viewBox="0 0 11 11"><circle cx="5.500" cy="5.500" r="2.500" fill="none" stroke="#333" stroke-width=".9"/><circle cx="5.500" cy="5.500" r="3.700" fill="none" stroke="#444" stroke-width="1" stroke-dasharray="1.100 1.800"/></svg>
<svg class="a" style="left:780px;top:145.7px;" width="16" height="16" viewBox="0 0 16 16"><path d="M4 6l4-3h5v5l-3 2v3l-4 1-3-2v-4z" fill="#c9c9c9" stroke="#555" stroke-width=".8"/><path d="M4 6h5l4-3M9 6v4" fill="none" stroke="#555" stroke-width=".7"/></svg>
<svg class="a" style="left:780px;top:170.0px;" width="16" height="16" viewBox="0 0 16 16"><rect x="2" y="3" width="7" height="10" fill="#e8882f"/><circle cx="6" cy="8" r="2.500" fill="#c9c9c9" stroke="#222" stroke-width=".8"/><path d="M10 5l5 3-5 3z" fill="#222"/><path d="M11 6.500l2.500 1.500-2.500 1.500z" fill="#e6e6e6"/></svg>
<svg class="a" style="left:780px;top:195.0px;" width="16" height="16" viewBox="0 0 16 16"><path d="M2 11l4-2v-4l3-2 2 1v4l4 2v2l-5 2.500-8-3z" fill="#8f9397"/><path d="M2 11l7 2.500 6-3" fill="none" stroke="#cfd2d5" stroke-width=".7"/></svg>
<div class="a" style="left:779px;top:213px;width:18px;height:25px;background:#fff;"></div>
<svg class="a" style="left:780px;top:218.0px;" width="16" height="16" viewBox="0 0 16 16"><path d="M3 2v11M3 5h3M3 9h4M3 13h3" stroke="#2e5fb0" stroke-width="1" fill="none"/><rect x="6" y="3.500" width="3" height="3" fill="#2e5fb0"/><path d="M8 9l5-1.500M8 13h6" stroke="#4a7fd0" stroke-width="1.200"/><path d="M11 5l2 3" stroke="#2e5fb0" stroke-width="1"/></svg>
<svg class="a" style="left:780px;top:242.0px;" width="16" height="16" viewBox="0 0 16 16"><path d="M2 6l6-3 6 3v6l-6 3-6-3z" fill="#b9bdc1" stroke="#666" stroke-width=".6"/><rect x="6" y="2" width="5" height="8" fill="#e8882f"/><path d="M2 12h12" stroke="#3a66b0" stroke-width="1"/></svg>
<svg class="a" style="left:780px;top:266.5px;" width="16" height="16" viewBox="0 0 16 16"><path d="M2 9l4-5 6 1 2 5-5 4-6-1z" fill="#9a9ea2" stroke="#666" stroke-width=".6"/><path d="M11 1v5M8.500 3.500h5" stroke="#e8882f" stroke-width="1.300"/></svg>
<svg class="a" style="left:780px;top:287.0px;" width="16" height="16" viewBox="0 0 16 16"><path d="M2 3l5-1 4 3-1 4-5 1-3-3z" fill="#e8882f"/><circle cx="10" cy="10" r="4" fill="#fff" stroke="#333" stroke-width="1"/><path d="M4 9l4 2" stroke="#333" stroke-width="1"/></svg>
<svg class="a" style="left:780px;top:312.6px;" width="16" height="16" viewBox="0 0 16 16"><circle cx="3.500" cy="4" r="1.800" fill="#2a5fd0"/><circle cx="12" cy="4" r="1.800" fill="#2a5fd0"/><circle cx="3.500" cy="12" r="1.800" fill="#2a5fd0"/><circle cx="12" cy="12" r="1.800" fill="#2a5fd0"/><path d="M3.500 4v8M12 4v8M3.500 8l4-3 4.500 7" stroke="#2a5fd0" stroke-width="1" fill="none"/><circle cx="8" cy="8" r="1.200" fill="#d03030"/></svg>
<svg class="a" style="left:780px;top:337.0px;" width="16" height="16" viewBox="0 0 16 16"><path d="M3 8l5-2 6 2v4l-6 2-5-2z" fill="#e8a12f"/><path d="M3 8l5 2 6-2" stroke="#b9741a" stroke-width=".6" fill="none"/><path d="M8 10v4l6-2v-4z" fill="#3a66c0"/><path d="M2 5l9-3" stroke="#3a3a3a" stroke-width=".9"/><path d="M7 3.500v3" stroke="#777" stroke-width=".7"/></svg>
<svg class="a" style="left:780px;top:368.8px;" width="16" height="16" viewBox="0 0 16 16"><circle cx="7" cy="9" r="5" fill="#a5a5a5" stroke="#777" stroke-width=".7"/><circle cx="6" cy="8" r="2" fill="#c9c9c9"/><path d="M9 3a6 6 0 0 1 5 5" stroke="#eee" stroke-width="1.200" fill="none"/></svg>
<svg class="a" style="left:780px;top:400.0px;" width="16" height="16" viewBox="0 0 16 16"><rect x="1.500" y="1.500" width="13" height="13" fill="#f4f4f4" stroke="#8a8a8a" stroke-width="1"/><path d="M1.500 4h13" stroke="#8a8a8a" stroke-width=".8"/><circle cx="8" cy="9.500" r="4" fill="#3f9ad0"/><path d="M5 8c2 1 3-1 5 1M6 12c1-1 3 0 4-1.500" stroke="#dff0fa" stroke-width=".9" fill="none"/></svg>
<svg class="a" style="left:780px;top:430.0px;" width="16" height="16" viewBox="0 0 16 16"><circle cx="8" cy="8" r="6" fill="#f4f4f4" stroke="#666" stroke-width="1.100"/><path d="M8 4v4.500h3" fill="none" stroke="#444" stroke-width="1"/></svg>
<svg class="a" style="left:780px;top:453.8px;" width="16" height="16" viewBox="0 0 16 16"><path d="M3 3l4-1 1 3-2 2z" fill="#e03a3a"/><path d="M3 6l4 0 1 3-4 1z" fill="#f0d030"/><path d="M3 10l5-1 1 3-5 2z" fill="#30b8d0"/><path d="M3 13l6-1 0 3-6 0z" fill="#3060d0"/><path d="M8 5l6 9-2 1-5-8z" fill="#1c1c1c"/></svg>
<svg class="a" style="left:780px;top:477.8px;" width="16" height="16" viewBox="0 0 16 16"><path d="M3 2v12M3 8l5-6h3l-5 6 6 6h-3z" fill="#2a6fc0"/><path d="M10 3l4 4-1 5" stroke="#1c3f80" stroke-width="1.200" fill="none"/></svg>
<svg class="a" style="left:780px;top:502.0px;" width="16" height="16" viewBox="0 0 16 16"><rect x="2" y="2" width="12" height="12" fill="#f4f4f4" stroke="#999" stroke-width=".6"/><path d="M3.500 3.500l9 9M12.500 3.500l-9 9" stroke="#333" stroke-width="1.500"/><path d="M2.500 2.500l3 1-2 2zM13.500 2.500l-1 3-2-2z" fill="#555"/></svg>
<svg class="a" style="left:780px;top:527.5px;" width="16" height="16" viewBox="0 0 16 16"><rect x="2" y="5" width="10" height="8" fill="#3a5f9a"/><rect x="3" y="6" width="5" height="5" fill="#d5dde8"/><circle cx="12" cy="4.500" r="2.800" fill="#f0e070"/><path d="M8 12l3-3 2 1-2 3z" fill="#1c1c1c"/></svg>

<div class="a" style="left:2px;top:616px;width:796px;height:33px;background:#fff;"></div>
<div class="a" style="left:2px;top:636.5px;width:796px;height:1px;background:#e6e6e6;"></div>
<div class="t" style="left:3.5px;top:640px;font-size:6.3px;color:#222;">在工序导航器中编辑对象，或者是使用"插入"新建对象</div>
<svg class="a" style="left:7.5px;top:620px;" width="15" height="14" viewBox="0 0 15 14"><path d="M1.500 12l10-10.500 2 2-10 10.500z" fill="#fff" stroke="#333" stroke-width=".9"/><path d="M4 9.500l1 1M6 7.500l1 1M8 5.500l1 1" stroke="#555" stroke-width=".6"/></svg>
<svg class="a" style="left:26px;top:620px;" width="15" height="14" viewBox="0 0 15 14"><rect x="1" y="1" width="11" height="9.500" fill="#fff" stroke="#555" stroke-width=".8"/><path d="M1 3.200h11" stroke="#555" stroke-width=".8"/><path d="M3 6h2M7 6h2" stroke="#e08a2a" stroke-width="1.200"/><path d="M6 13l6.500-6.500 1.500 1.500-6.500 6.500z" fill="#fff" stroke="#333" stroke-width=".8"/></svg>
<svg class="a" style="left:43.5px;top:620px;" width="15" height="14" viewBox="0 0 15 14"><rect x="1" y="1" width="11" height="9.500" fill="#fff" stroke="#555" stroke-width=".8"/><path d="M1 3.200h11" stroke="#555" stroke-width=".8"/><path d="M3 6h2M7 6h2" stroke="#e08a2a" stroke-width="1.200"/><path d="M5.500 13.500a4.500 4.500 0 0 1 9 0z" fill="#fff" stroke="#333" stroke-width=".9"/><path d="M10 13.500v-2" stroke="#333" stroke-width=".7"/></svg>
<svg class="a" style="left:63.5px;top:620px;" width="15" height="14" viewBox="0 0 15 14"><path d="M1 8l6-6.500 6 4-2 6-8 1z" fill="#ee8a22"/><path d="M3 8l4-4 4 2.500" stroke="#f7c080" stroke-width="1" fill="none"/><path d="M7 13l2-5 4 1.500 1 3.500z" fill="#fff" stroke="#222" stroke-width=".9"/><path d="M9 8l3 5" stroke="#222" stroke-width=".7"/></svg>
<svg class="a" style="left:82px;top:620px;" width="15" height="14" viewBox="0 0 15 14"><path d="M4 1v6M1 4h6" stroke="#7ab5d5" stroke-width=".9"/><circle cx="9.500" cy="10" r="3.300" fill="#fff" stroke="#555" stroke-width=".8"/><path d="M9.500 8.500v3" stroke="#777" stroke-width=".7"/></svg>
<svg class="a" style="left:102.5px;top:620px;" width="15" height="14" viewBox="0 0 15 14"><path d="M1 7l6-6 6 3-1 4-10 1z" fill="#ee8a22"/><rect x="4" y="5" width="9" height="8.500" fill="#fff" stroke="#333" stroke-width=".9"/><path d="M6 11h5M9.500 7v3l1.500-1.500" stroke="#444" stroke-width=".7" fill="none"/></svg>
<svg class="a" style="left:120.5px;top:620px;" width="15" height="14" viewBox="0 0 15 14"><path d="M1.500 1v7l3 2" fill="none" stroke="#6a8a6a" stroke-width=".7"/><path d="M4 7l5-2.500 5 2.500v4l-5 2.500-5-2.500z" fill="#b0b4b8" stroke="#4a4d50" stroke-width=".7"/><path d="M4 7l5 2.500 5-2.500M9 9.500v4" stroke="#4a4d50" stroke-width=".6" fill="none"/><path d="M4 7l5-2.500 5 2.500-5 2.500z" fill="#d9dcdf"/></svg>
<svg class="a" style="left:137.5px;top:620px;" width="16" height="14" viewBox="0 0 16 14"><path d="M2 1v8l4 3" fill="none" stroke="#4aa55a" stroke-width=".8"/><path d="M2 9l4-2" stroke="#d85a4a" stroke-width=".8"/><path d="M10 5v8M6 9h8" stroke="#222" stroke-width=".9"/><path d="M10 4l1.300 1.800h-2.600zM10 14l1.300-1.800h-2.600zM5 9l1.800-1.300v2.600zM15 9l-1.800-1.300v2.600z" fill="#222"/></svg>
<svg class="a" style="left:158.5px;top:620px;" width="12" height="14" viewBox="0 0 12 14"><path d="M3 1.500v11" stroke="#e0b08a" stroke-width=".8"/><path d="M3 8l7-5M3 8l7 5" stroke="#e08a2a" stroke-width="1.100" fill="none"/><circle cx="3" cy="8" r="1" fill="#c96a1a"/></svg>
<svg class="a" style="left:176px;top:620px;" width="15" height="14" viewBox="0 0 15 14"><circle cx="7" cy="8" r="3" fill="none" stroke="#d58ab0" stroke-width=".8"/><path d="M7 1v7M7 8l-6 4.500M7 8l6 4.500" stroke="#c96a9a" stroke-width=".9" fill="none"/></svg>
<svg class="a" style="left:195px;top:620px;" width="15" height="14" viewBox="0 0 15 14"><path d="M1.500 1v7l3 2.500" fill="none" stroke="#6a9a7a" stroke-width=".7"/><path d="M1.500 8l3-1.500" stroke="#c9705a" stroke-width=".7"/><path d="M4 8l5-2 4.500 2v5h-9.500z" fill="#a5a9ad" stroke="#4a4d50" stroke-width=".7"/><rect x="7" y="9" width="5" height="4" fill="#e9e9e9" stroke="#333" stroke-width=".7"/></svg>
<svg class="a" style="left:214.5px;top:620px;" width="15" height="14" viewBox="0 0 15 14"><path d="M2 1v9l3 3" fill="none" stroke="#7a9a8a" stroke-width=".7"/><path d="M2 10l5-3" stroke="#c97a6a" stroke-width=".7"/><path d="M5 2h8v3h-8M7 2v3M9 2v3M11 2v3" stroke="#444" stroke-width=".7" fill="#ddd"/></svg>
<svg class="a" style="left:232.5px;top:620px;" width="15" height="14" viewBox="0 0 15 14"><path d="M1 4l5.500-2.500 5.500 2.500-5.500 2.500z" fill="#d5d8db" stroke="#3a3d40" stroke-width=".7"/><path d="M1 6.500l5.500 2.500 5.500-2.500M1 9l5.500 2.500 5.500-2.500" fill="none" stroke="#3a3d40" stroke-width=".8"/><path d="M9 8v-2.500h1.500v2.500l2 .5v4.500h-4.500l-1-3z" fill="#fff" stroke="#222" stroke-width=".8"/></svg>
<svg class="a" style="left:252px;top:620px;" width="15" height="14" viewBox="0 0 15 14"><path d="M1 4l5.500-2.500 5.500 2.500-5.500 2.500z" fill="#d5d8db" stroke="#3a3d40" stroke-width=".7"/><path d="M1 6.500l5.500 2.500 5.500-2.500M1 9l5.500 2.500 5.500-2.500" fill="none" stroke="#3a3d40" stroke-width=".8"/><rect x="8" y="7" width="6" height="6" fill="#e9e9e9" stroke="#333" stroke-width=".8"/><path d="M8 10h6M11 7v6M8.500 7.500l5 5" stroke="#333" stroke-width=".6"/></svg>
<svg class="a" style="left:270px;top:620px;" width="15" height="14" viewBox="0 0 15 14"><path d="M1 4l5.500-2.500 5.500 2.500-5.500 2.500z" fill="#d5d8db" stroke="#3a3d40" stroke-width=".7"/><path d="M1 6.500l5.500 2.500 5.500-2.500M1 9l5.500 2.500 5.500-2.500" fill="none" stroke="#3a3d40" stroke-width=".8"/><circle cx="10.500" cy="10" r="3" fill="#e9e9e9" stroke="#333" stroke-width=".9"/><circle cx="10.500" cy="10" r="1" fill="#555"/></svg>
<svg class="a" style="left:289.5px;top:620px;" width="15" height="14" viewBox="0 0 15 14"><path d="M1.500 5l5.500-3 5.500 3v5l-5.500 3-5.500-3z" fill="#f3e6d5" stroke="#b58a6a" stroke-width=".8"/><path d="M1.500 5l5.500 3 5.500-3M7 8v5M4 3.500l5.500 3M10 3.500l-5.500 3" stroke="#b58a6a" stroke-width=".6" fill="none"/><circle cx="7" cy="7.500" r="1.800" fill="#e9c9a5" stroke="#9a6a4a" stroke-width=".5"/></svg>
<svg class="a" style="left:308px;top:619.4px;" width="14" height="13.5" viewBox="0 0 14 13.5"><rect x=".5" y=".5" width="13" height="12.500" fill="#fff" stroke="#8a9ab0" stroke-width=".9"/><rect x="3.500" y="3.300" width="7" height="7" fill="#ee8a22"/></svg>
<svg class="a" style="left:327px;top:620px;" width="15" height="14" viewBox="0 0 15 14"><path d="M1 4l6-3 7 3v6l-6 3-7-3z" fill="#ee8a22"/><path d="M1 4l7 3 6-3M8 7v6" stroke="#b96a1a" stroke-width=".6" fill="none"/><path d="M1 4l6-3 7 3-6 3z" fill="#f7b060"/><path d="M1 4v6l7 3" fill="none" stroke="#3a5a8a" stroke-width=".7"/><rect x="8.500" y="6.500" width="5" height="6.500" rx="1.500" fill="#fff" stroke="#555" stroke-width=".8"/></svg>
<svg class="a" style="left:345.5px;top:620px;" width="15" height="14" viewBox="0 0 15 14"><path d="M1 6l7-5 6 5-7 6z" fill="#ee8a22"/><path d="M3 6l5-3.500 4 3.500-5 4z" fill="#d9dcdf" stroke="#5a5d60" stroke-width=".6"/><path d="M1 6l6 6 7-6" fill="none" stroke="#7a3a1a" stroke-width=".8"/></svg>
<svg class="a" style="left:364.5px;top:620px;" width="15" height="14" viewBox="0 0 15 14"><path d="M1 5l7-2 6 6-5 4z" fill="#ee8a22"/><path d="M8 3l2-1 5 5-1 2z" fill="#b0b4b8" stroke="#5a5d60" stroke-width=".5"/><path d="M1 5l8 8" stroke="#b96a1a" stroke-width=".7"/></svg>
<svg class="a" style="left:383px;top:620px;" width="16" height="15" viewBox="0 0 16 15"><rect x="1" y="0" width="10" height="10" fill="#ee8a22"/><path d="M10 6v8M6 10h8" stroke="#222" stroke-width=".9"/><path d="M10 5l1.300 1.800h-2.600zM10 15l1.300-1.800h-2.600zM5 10l1.800-1.300v2.600zM15 10l-1.800-1.300v2.600z" fill="#222"/><circle cx="10" cy="10" r="2" fill="#fff" stroke="#222" stroke-width=".6"/></svg>
<svg class="a" style="left:402.5px;top:620px;" width="15" height="14" viewBox="0 0 15 14"><path d="M5 5l3.500-1.500 3.500 1.500v4l-3.500 1.500-3.500-1.500z" fill="#5a8ae0" stroke="#2a4a9a" stroke-width=".6"/><path d="M5 5l3.500 1.500 3.500-1.500" fill="none" stroke="#cfe0fa" stroke-width=".6"/><path d="M8.500 1v3M1 11l4-1.500M12 9.500l2.500 1" stroke="#e0a05a" stroke-width=".8"/><circle cx="8.500" cy="1.300" r=".9" fill="#3a6ad0"/></svg>
<svg class="a" style="left:420.5px;top:620px;" width="15" height="14" viewBox="0 0 15 14"><path d="M1 2l6.500 4v7l-6.500-4z" fill="#d9cdb8" stroke="#6a6d70" stroke-width=".7"/><path d="M14 2l-6.500 4v7l6.500-4z" fill="#c5c8cb" stroke="#6a6d70" stroke-width=".7"/><path d="M3 12l4.500 1.500 4.500-1.500" stroke="#c9a57a" stroke-width=".8" fill="none"/></svg>
<svg class="a" style="left:440.5px;top:620px;" width="13" height="14" viewBox="0 0 13 14"><path d="M6.500 1l-5 12h5z" fill="#1c2a6a"/><path d="M6.500 1l5 12h-5z" fill="#c9352a"/><path d="M6.500 1v12" stroke="#e9e9f4" stroke-width="1"/></svg>
<svg class="a" style="left:458.5px;top:620px;" width="15" height="14" viewBox="0 0 15 14"><path d="M1 11l9-9 3 3-9 9z" fill="#c9c5e8" stroke="#8a85c0" stroke-width=".6"/><path d="M5 7l3 3" stroke="#3a3a9a" stroke-width="1.200"/><path d="M10 2l3-1-1 4z" fill="#6a6ab0"/><path d="M1 11l-.5 3 3.500-.5z" fill="#a5a0d0"/></svg>
<svg class="a" style="left:478px;top:620px;" width="15" height="14" viewBox="0 0 15 14"><path d="M1 4l6-3 6.500 3v5.500l-6 3-6.500-3z" fill="#ee8a22"/><path d="M1 4l6-3 6.500 3-6 3z" fill="#f7b060"/><path d="M1 4l6.500 3 6-3M7.500 7v5.500" stroke="#6a6d70" stroke-width=".7" fill="none"/><path d="M1 9.500l6.500 3 6-3" stroke="#5a6a7a" stroke-width=".8" fill="none"/><rect x="8" y="8" width="5" height="4.500" fill="#b0b4b8" stroke="#555" stroke-width=".6"/></svg>
<svg class="a" style="left:495.5px;top:620px;" width="15" height="14" viewBox="0 0 15 14"><path d="M1 4l6-3 6.500 3v5.500l-6 3-6.500-3z" fill="#ee8a22"/><path d="M1 4l6-3 6.500 3-6 3z" fill="#f7b060"/><path d="M1 4l6.500 3 6-3M7.500 7v5.500" stroke="#6a6d70" stroke-width=".7" fill="none"/><path d="M1 9.500l6.500 3 6-3" stroke="#5a6a7a" stroke-width=".8" fill="none"/><path d="M9 8l5 5M14 8l-5 5" stroke="#3a5a8a" stroke-width="1.100"/></svg>
<svg class="a" style="left:515.5px;top:620px;" width="15" height="14" viewBox="0 0 15 14"><path d="M1 8l5-7 8 3-4 9z" fill="#ee8a22"/><path d="M3 8l4-5 5 2" stroke="#f7c080" stroke-width=".9" fill="none"/><path d="M1 8l9 5" stroke="#9a5a1a" stroke-width=".8"/></svg>
<svg class="a" style="left:534px;top:620px;" width="15" height="14" viewBox="0 0 15 14"><path d="M1 4l6-3 6 3v6l-6 3-6-3z" fill="#e8a04a" stroke="#5a6a75" stroke-width=".8"/><path d="M1 4l6 3 6-3-6-3z" fill="#f0b870"/><path d="M7 7v6l6-3v-6z" fill="#c9b8a0"/><path d="M1 4l6 3 6-3M7 7v6" stroke="#5a6a75" stroke-width=".6" fill="none"/></svg>
<svg class="a" style="left:553.5px;top:620px;" width="15" height="14" viewBox="0 0 15 14"><path d="M1 4l6-3 6 3v6l-6 3-6-3z" fill="#e8c9a5" stroke="#5a6a75" stroke-width=".8"/><path d="M1 4l6 3 6-3-6-3z" fill="#e0a870"/><path d="M7 7v6l6-3v-6z" fill="#d0504a"/><path d="M1 4l6 3 6-3M7 7v6" stroke="#5a6a75" stroke-width=".6" fill="none"/></svg>
<svg class="a" style="left:560px;top:627px;" width="7" height="7" viewBox="0 0 7 7"><path d="M0 7l7-3.500v-3.500l-7 3.500z" fill="#6ab06a"/></svg>
<svg class="a" style="left:571.5px;top:620px;" width="15" height="14" viewBox="0 0 15 14"><defs><linearGradient id="hg" x1="0" y1="0" x2="1" y2="0"><stop offset="0" stop-color="#d8281a"/><stop offset=".5" stop-color="#ee8a22"/><stop offset="1" stop-color="#f5d84a"/></linearGradient></defs><path d="M1 8l8-6 5 3-8 6z" fill="url(#hg)"/><path d="M1 8v2l5 3 8-6v-2l-8 6z" fill="#2a1a10"/></svg>
<svg class="a" style="left:590.5px;top:620px;" width="15" height="14" viewBox="0 0 15 14"><path d="M1.500 1v12h12" fill="none" stroke="#e0c870" stroke-width="1.600"/><path d="M4 4l5-2.500 4 2v5l-4 2.500-5-2z" fill="#2a5a9a"/><path d="M5 5l4-1.500 3 1.500-4 2z" fill="#e0d05a"/><path d="M8 7v4l4-2.500v-3.500z" fill="#1c2a50"/><circle cx="8" cy="6" r="1.500" fill="#5ab0e0"/></svg>
<svg class="a" style="left:608.5px;top:620px;" width="15" height="14" viewBox="0 0 15 14"><path d="M1 12.500h13" stroke="#e0c870" stroke-width="1.500"/><path d="M2 6l5-2.500 6 2.500v5l-5 1-6-1z" fill="#8a3ab0"/><path d="M2 6l6 2 5-2-6-2.500z" fill="#c07ae0"/><path d="M8 8v4" stroke="#5a1a80" stroke-width=".7"/><path d="M9 3l2-2M12 4l2-1" stroke="#e0b0d0" stroke-width=".7"/></svg>
<div class="a" style="left:627.5px;top:619px;width:16px;height:15.5px;background:#cfe4ee;border:1px solid #9ac0d8"></div>
<svg class="a" style="left:628.5px;top:620px;" width="15" height="14" viewBox="0 0 15 14"><rect x="2" y="2" width="5" height="6" fill="#d8324a"/><rect x="6" y="4" width="5" height="7" fill="#f4a5b5"/><path d="M2 12h10" stroke="#3a5a9a" stroke-width="1"/><rect x="8" y="8" width="4" height="4" fill="#2a3a6a"/><path d="M3 3l3 4" stroke="#fff" stroke-width=".8"/></svg>
<div class="a" style="left:647px;top:623.3px;width:8px;height:6.5px;background:#fff;border:1px solid #7a7a7a;border-radius:1.500px"></div>
<svg class="a" style="left:657px;top:620px;" width="15" height="14" viewBox="0 0 15 14"><path d="M1 3h13v4a6.500 6 0 0 1-13 0z" fill="#3a3a3a"/><ellipse cx="7.500" cy="3.500" rx="6.500" ry="2" fill="#d9d9d9" stroke="#555" stroke-width=".6"/><path d="M2 8a6 5 0 0 0 11 0" stroke="#9a9a9a" stroke-width="1" fill="none"/><path d="M3 9.500a5 4 0 0 0 9 0" fill="#f1f1f1"/></svg>
<svg class="a" style="left:677px;top:620px;" width="15" height="14" viewBox="0 0 15 14"><path d="M2 4h8l2-2.500 1.500 1-1.500 2.500v8h-10z" fill="#f4f4f4" stroke="#444" stroke-width=".9"/><circle cx="6" cy="9" r="2.500" fill="#fff" stroke="#444" stroke-width=".8"/><rect x="4.500" y="7.500" width="3" height="3" fill="none" stroke="#666" stroke-width=".6"/></svg>
<div class="t" style="left:696px;top:624px;font-size:6.2px;color:#333;">删除组镜</div>
<div class="a" style="left:725.5px;top:619px;width:1px;height:15px;background:#e9e9e9;"></div>
<div class="dot" style="left:790.500px;top:629px;background:#333"></div>

<div class="a" id="frameL"></div><div class="a" id="frameR"></div><div class="a" id="frameB"></div>
</body></html>
